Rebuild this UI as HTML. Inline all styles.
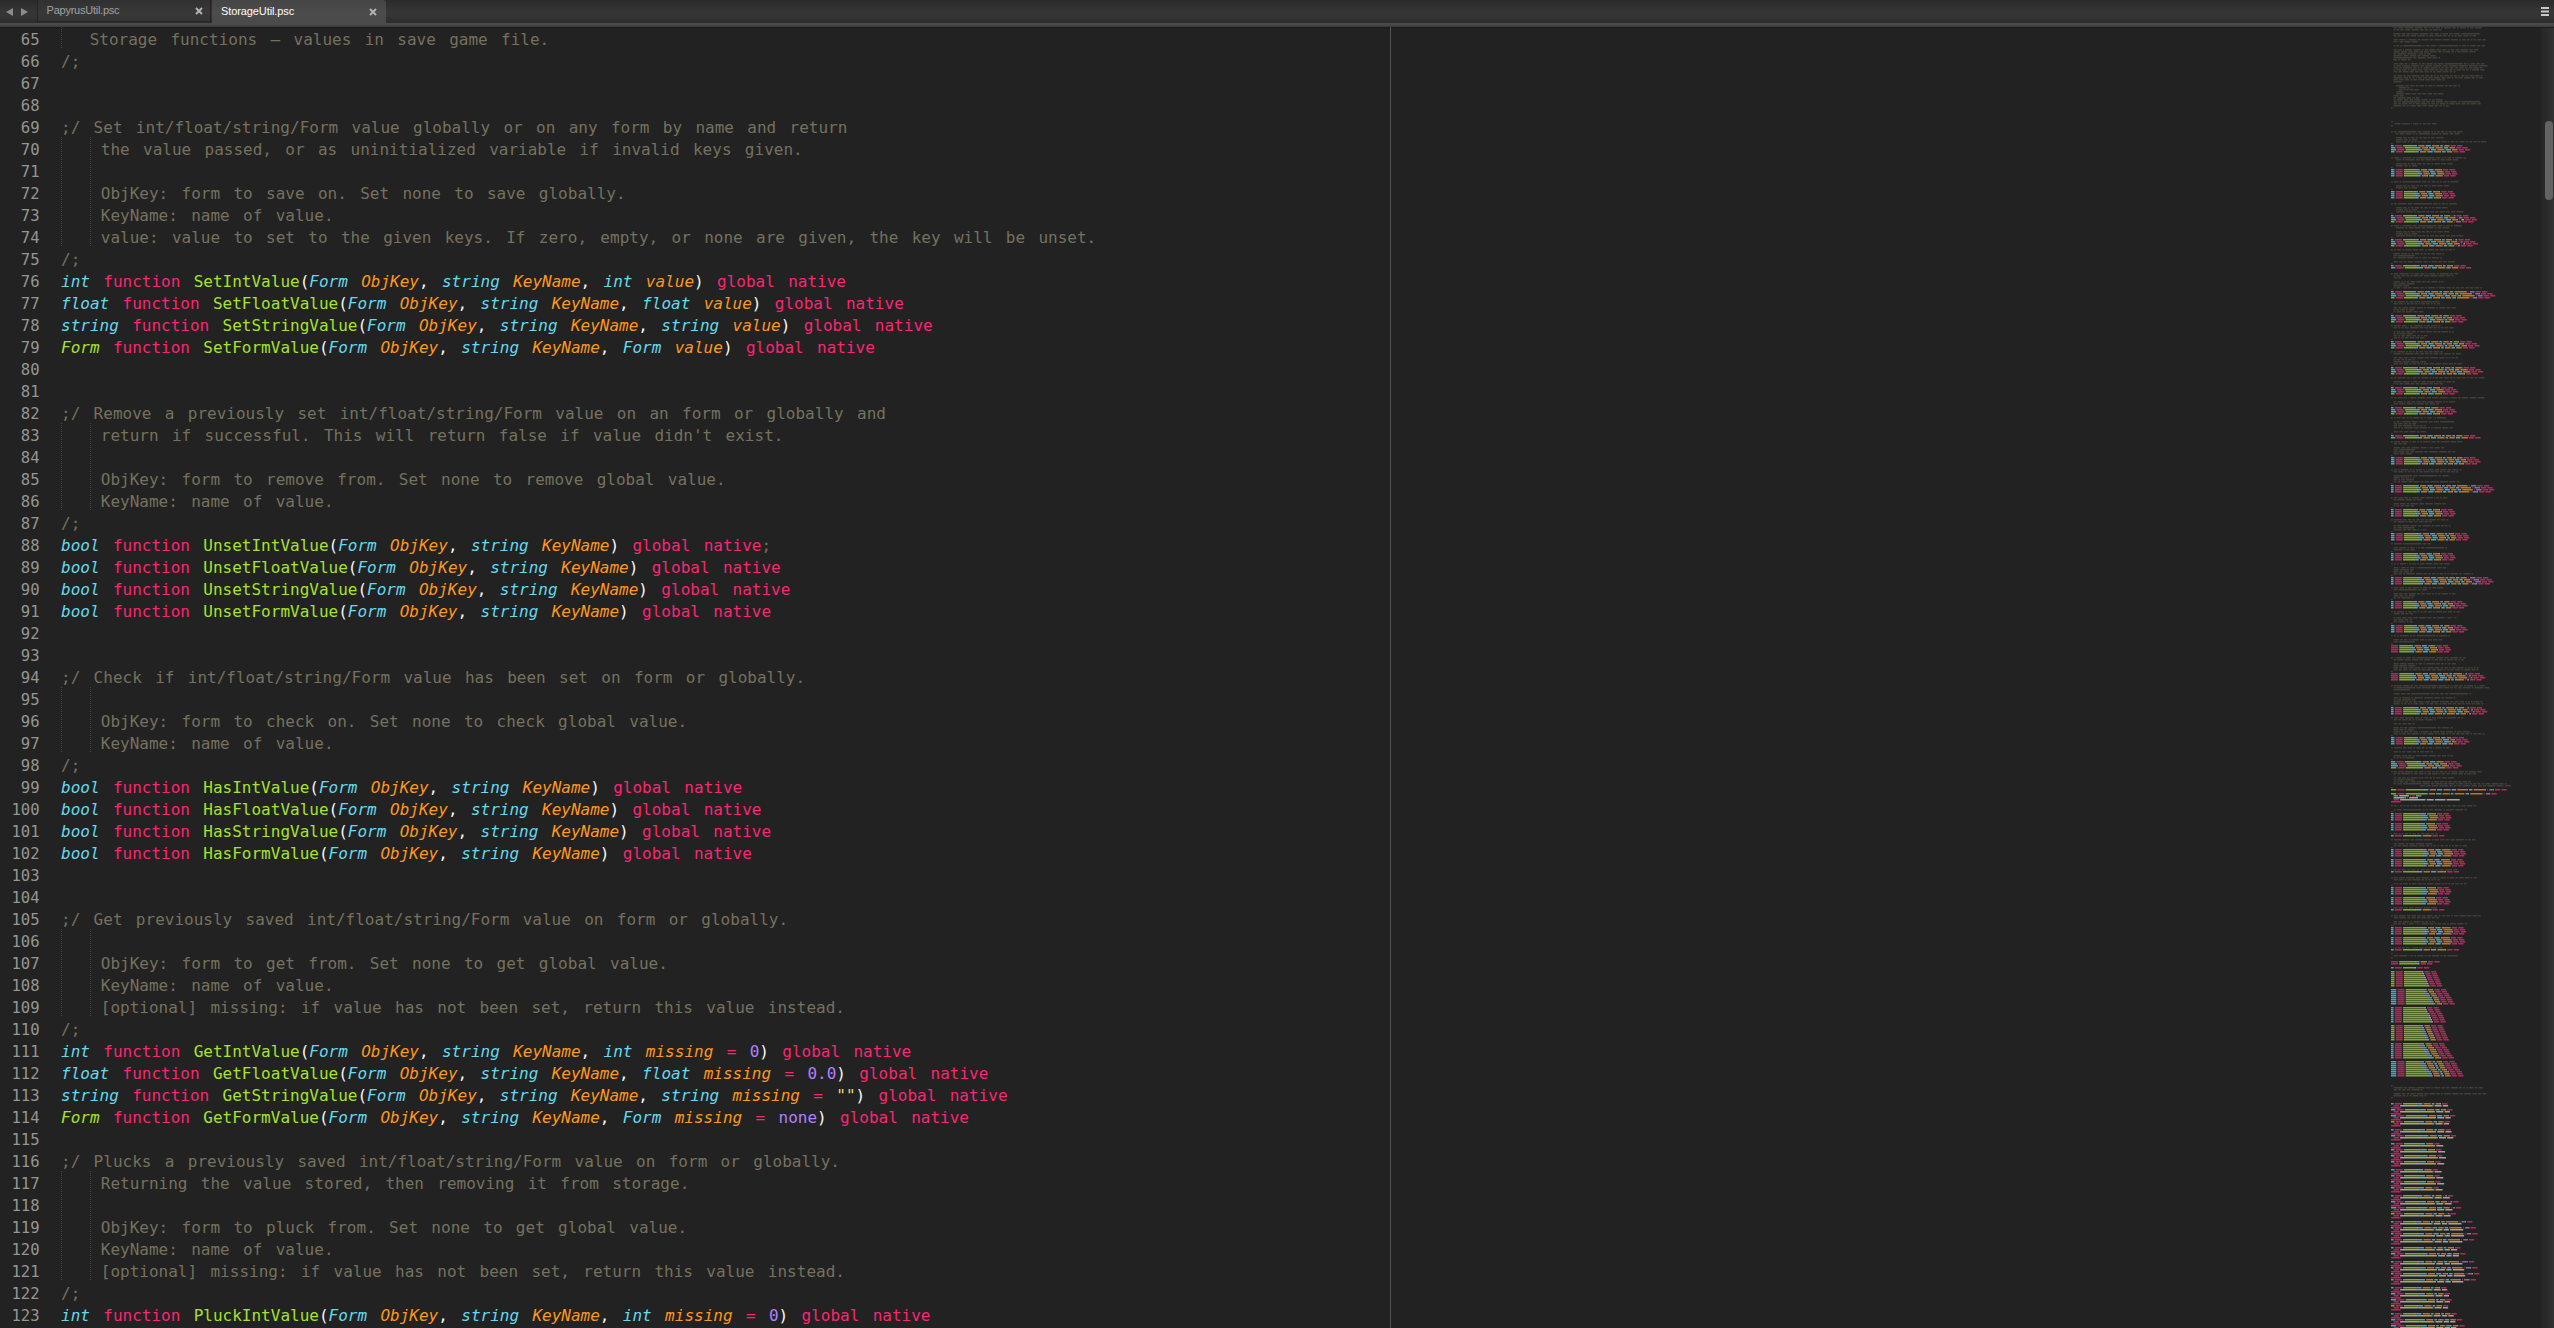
<!DOCTYPE html>
<html><head><meta charset="utf-8"><title>StorageUtil.psc</title>
<style>
html,body{margin:0;padding:0;background:#222222;}
body{width:2554px;height:1328px;overflow:hidden;position:relative;font-family:"DejaVu Sans Mono","Liberation Mono",monospace;}
#tabs{position:absolute;left:0;top:0;width:2554px;height:23px;background:linear-gradient(#2a2a2a,#363636 50%,#343434 72%,#2d2d2d 96%,#2a2a2a);}
#tabline{position:absolute;left:0;top:23px;width:2554px;height:6px;background:linear-gradient(#4c4c4c 0,#444 3px,#303030 4px,#1e1e1e 4.5px,#1e1e1e 5.3px,#222 6px);}
.tab{position:absolute;top:0;height:22px;width:174px;font:11px "Liberation Sans","DejaVu Sans",sans-serif;letter-spacing:-0.25px;line-height:21px;color:#a0a0a0;white-space:nowrap;box-sizing:border-box;}
.tab b{font-weight:normal;position:absolute;left:8.6px;top:0;}
.tab svg{position:absolute;left:157px;top:7px;}
#t1{left:37px;background:linear-gradient(#303030,#393939 60%,#343434);border-left:1px solid #252525;border-right:1px solid #252525;border-bottom:1px solid #282828;}
#t2{left:212px;background:linear-gradient(#454545,#4c4c4c 50%,#4a4a4a);color:#fff;height:24px;border-radius:0 3px 0 0;}
#t2 b{top:1px;left:9px;letter-spacing:-0.1px;}
#t2 svg{top:7.5px;left:157.3px;}
.arr{position:absolute;top:7.8px;width:0;height:0;border-top:4px solid transparent;border-bottom:4px solid transparent;}
#al{left:5.5px;border-right:7.3px solid #8c8c8c;}
#ar{left:21px;border-left:7.3px solid #8c8c8c;}
#menu{position:absolute;left:2541px;top:6.5px;width:8px;height:2px;background:#c8c8c8;box-shadow:0 3.5px 0 #c8c8c8,0 7px 0 #c8c8c8;}
#code{position:absolute;left:0;top:29px;width:2380px;font-size:16px;line-height:22px;color:#f8f8f2;word-spacing:3.72px;}
.ln{height:22px;position:relative;}
.no{position:absolute;left:0;top:0;width:39.6px;text-align:right;color:#95968f;font-size:15.6px;}
.tx{position:absolute;left:61px;top:0;white-space:pre;}
.c{color:#75715e;}
.i1{padding-left:28.7px;}
.i2{padding-left:39.8px;}
.g1,.g2{position:absolute;top:-2px;width:1px;height:22px;background:repeating-linear-gradient(#444442 0,#444442 1px,transparent 1px,transparent 2px);}
.g1{left:0;} .g2{left:29px;}
.t{color:#66d9ef;font-style:italic;}
.g{color:#a6e22e;font-style:italic;}
.k{color:#f92672;}
.f{color:#a6e22e;}
.a{color:#fd971f;font-style:italic;}
.n{color:#ae81ff;}
.s{color:#e6db74;}
.p{color:#f8f8f2;}
#ruler{position:absolute;left:1390px;top:27px;width:1px;height:1301px;background:#525252;}
#mm{position:absolute;left:2391.2px;top:27px;}
#sbtrack{position:absolute;left:2541px;top:28px;width:13px;height:1300px;background:linear-gradient(90deg,#262626,#313131);}
#sb{position:absolute;left:2545px;top:121px;width:8px;height:79px;border-radius:4px;background:#636363;}
</style></head><body>
<div id="tabs">
<i class="arr" id="al"></i><i class="arr" id="ar"></i>
<div class="tab" id="t1"><b>PapyrusUtil.psc</b><svg width="8" height="8" viewBox="0 0 8 8"><path d="M1 1L7 7M7 1L1 7" stroke="#b4b4b4" stroke-width="1.9" fill="none"/></svg></div>
<div class="tab" id="t2"><b>StorageUtil.psc</b><svg width="8" height="8" viewBox="0 0 8 8"><path d="M1 1L7 7M7 1L1 7" stroke="#b4b4b4" stroke-width="1.9" fill="none"/></svg></div>
<div id="menu"></div>
</div>
<div id="tabline"></div>
<div id="code">
<div class="ln"><span class="no">65</span><span class="tx"><i class="g1"></i><span class="c i1">Storage functions – values in save game file.</span></span></div>
<div class="ln"><span class="no">66</span><span class="tx"><span class="c">/;</span></span></div>
<div class="ln"><span class="no">67</span><span class="tx"></span></div>
<div class="ln"><span class="no">68</span><span class="tx"></span></div>
<div class="ln"><span class="no">69</span><span class="tx"><span class="c">;/ Set int/float/string/Form value globally or on any form by name and return</span></span></div>
<div class="ln"><span class="no">70</span><span class="tx"><i class="g1"></i><i class="g2"></i><span class="c i2">the value passed, or as uninitialized variable if invalid keys given.</span></span></div>
<div class="ln"><span class="no">71</span><span class="tx"><i class="g1"></i><i class="g2"></i><span class="c i2"></span></span></div>
<div class="ln"><span class="no">72</span><span class="tx"><i class="g1"></i><i class="g2"></i><span class="c i2">ObjKey: form to save on. Set none to save globally.</span></span></div>
<div class="ln"><span class="no">73</span><span class="tx"><i class="g1"></i><i class="g2"></i><span class="c i2">KeyName: name of value.</span></span></div>
<div class="ln"><span class="no">74</span><span class="tx"><i class="g1"></i><i class="g2"></i><span class="c i2">value: value to set to the given keys. If zero, empty, or none are given, the key will be unset.</span></span></div>
<div class="ln"><span class="no">75</span><span class="tx"><span class="c">/;</span></span></div>
<div class="ln"><span class="no">76</span><span class="tx"><span class="t">int</span> <span class="k">function</span> <span class="f">SetIntValue</span><span class="p">(</span><span class="t">Form</span> <span class="a">ObjKey</span><span class="p">,</span> <span class="t">string</span> <span class="a">KeyName</span><span class="p">,</span> <span class="t">int</span> <span class="a">value</span><span class="p">)</span> <span class="k">global</span> <span class="k">native</span></span></div>
<div class="ln"><span class="no">77</span><span class="tx"><span class="t">float</span> <span class="k">function</span> <span class="f">SetFloatValue</span><span class="p">(</span><span class="t">Form</span> <span class="a">ObjKey</span><span class="p">,</span> <span class="t">string</span> <span class="a">KeyName</span><span class="p">,</span> <span class="t">float</span> <span class="a">value</span><span class="p">)</span> <span class="k">global</span> <span class="k">native</span></span></div>
<div class="ln"><span class="no">78</span><span class="tx"><span class="t">string</span> <span class="k">function</span> <span class="f">SetStringValue</span><span class="p">(</span><span class="t">Form</span> <span class="a">ObjKey</span><span class="p">,</span> <span class="t">string</span> <span class="a">KeyName</span><span class="p">,</span> <span class="t">string</span> <span class="a">value</span><span class="p">)</span> <span class="k">global</span> <span class="k">native</span></span></div>
<div class="ln"><span class="no">79</span><span class="tx"><span class="g">Form</span> <span class="k">function</span> <span class="f">SetFormValue</span><span class="p">(</span><span class="t">Form</span> <span class="a">ObjKey</span><span class="p">,</span> <span class="t">string</span> <span class="a">KeyName</span><span class="p">,</span> <span class="t">Form</span> <span class="a">value</span><span class="p">)</span> <span class="k">global</span> <span class="k">native</span></span></div>
<div class="ln"><span class="no">80</span><span class="tx"></span></div>
<div class="ln"><span class="no">81</span><span class="tx"></span></div>
<div class="ln"><span class="no">82</span><span class="tx"><span class="c">;/ Remove a previously set int/float/string/Form value on an form or globally and</span></span></div>
<div class="ln"><span class="no">83</span><span class="tx"><i class="g1"></i><i class="g2"></i><span class="c i2">return if successful. This will return false if value didn't exist.</span></span></div>
<div class="ln"><span class="no">84</span><span class="tx"><i class="g1"></i><i class="g2"></i><span class="c i2"></span></span></div>
<div class="ln"><span class="no">85</span><span class="tx"><i class="g1"></i><i class="g2"></i><span class="c i2">ObjKey: form to remove from. Set none to remove global value.</span></span></div>
<div class="ln"><span class="no">86</span><span class="tx"><i class="g1"></i><i class="g2"></i><span class="c i2">KeyName: name of value.</span></span></div>
<div class="ln"><span class="no">87</span><span class="tx"><span class="c">/;</span></span></div>
<div class="ln"><span class="no">88</span><span class="tx"><span class="t">bool</span> <span class="k">function</span> <span class="f">UnsetIntValue</span><span class="p">(</span><span class="t">Form</span> <span class="a">ObjKey</span><span class="p">,</span> <span class="t">string</span> <span class="a">KeyName</span><span class="p">)</span> <span class="k">global</span> <span class="k">native</span><span class="c">;</span></span></div>
<div class="ln"><span class="no">89</span><span class="tx"><span class="t">bool</span> <span class="k">function</span> <span class="f">UnsetFloatValue</span><span class="p">(</span><span class="t">Form</span> <span class="a">ObjKey</span><span class="p">,</span> <span class="t">string</span> <span class="a">KeyName</span><span class="p">)</span> <span class="k">global</span> <span class="k">native</span></span></div>
<div class="ln"><span class="no">90</span><span class="tx"><span class="t">bool</span> <span class="k">function</span> <span class="f">UnsetStringValue</span><span class="p">(</span><span class="t">Form</span> <span class="a">ObjKey</span><span class="p">,</span> <span class="t">string</span> <span class="a">KeyName</span><span class="p">)</span> <span class="k">global</span> <span class="k">native</span></span></div>
<div class="ln"><span class="no">91</span><span class="tx"><span class="t">bool</span> <span class="k">function</span> <span class="f">UnsetFormValue</span><span class="p">(</span><span class="t">Form</span> <span class="a">ObjKey</span><span class="p">,</span> <span class="t">string</span> <span class="a">KeyName</span><span class="p">)</span> <span class="k">global</span> <span class="k">native</span></span></div>
<div class="ln"><span class="no">92</span><span class="tx"></span></div>
<div class="ln"><span class="no">93</span><span class="tx"></span></div>
<div class="ln"><span class="no">94</span><span class="tx"><span class="c">;/ Check if int/float/string/Form value has been set on form or globally.</span></span></div>
<div class="ln"><span class="no">95</span><span class="tx"><i class="g1"></i><i class="g2"></i><span class="c i2"></span></span></div>
<div class="ln"><span class="no">96</span><span class="tx"><i class="g1"></i><i class="g2"></i><span class="c i2">ObjKey: form to check on. Set none to check global value.</span></span></div>
<div class="ln"><span class="no">97</span><span class="tx"><i class="g1"></i><i class="g2"></i><span class="c i2">KeyName: name of value.</span></span></div>
<div class="ln"><span class="no">98</span><span class="tx"><span class="c">/;</span></span></div>
<div class="ln"><span class="no">99</span><span class="tx"><span class="t">bool</span> <span class="k">function</span> <span class="f">HasIntValue</span><span class="p">(</span><span class="t">Form</span> <span class="a">ObjKey</span><span class="p">,</span> <span class="t">string</span> <span class="a">KeyName</span><span class="p">)</span> <span class="k">global</span> <span class="k">native</span></span></div>
<div class="ln"><span class="no">100</span><span class="tx"><span class="t">bool</span> <span class="k">function</span> <span class="f">HasFloatValue</span><span class="p">(</span><span class="t">Form</span> <span class="a">ObjKey</span><span class="p">,</span> <span class="t">string</span> <span class="a">KeyName</span><span class="p">)</span> <span class="k">global</span> <span class="k">native</span></span></div>
<div class="ln"><span class="no">101</span><span class="tx"><span class="t">bool</span> <span class="k">function</span> <span class="f">HasStringValue</span><span class="p">(</span><span class="t">Form</span> <span class="a">ObjKey</span><span class="p">,</span> <span class="t">string</span> <span class="a">KeyName</span><span class="p">)</span> <span class="k">global</span> <span class="k">native</span></span></div>
<div class="ln"><span class="no">102</span><span class="tx"><span class="t">bool</span> <span class="k">function</span> <span class="f">HasFormValue</span><span class="p">(</span><span class="t">Form</span> <span class="a">ObjKey</span><span class="p">,</span> <span class="t">string</span> <span class="a">KeyName</span><span class="p">)</span> <span class="k">global</span> <span class="k">native</span></span></div>
<div class="ln"><span class="no">103</span><span class="tx"></span></div>
<div class="ln"><span class="no">104</span><span class="tx"></span></div>
<div class="ln"><span class="no">105</span><span class="tx"><span class="c">;/ Get previously saved int/float/string/Form value on form or globally.</span></span></div>
<div class="ln"><span class="no">106</span><span class="tx"><i class="g1"></i><i class="g2"></i><span class="c i2"></span></span></div>
<div class="ln"><span class="no">107</span><span class="tx"><i class="g1"></i><i class="g2"></i><span class="c i2">ObjKey: form to get from. Set none to get global value.</span></span></div>
<div class="ln"><span class="no">108</span><span class="tx"><i class="g1"></i><i class="g2"></i><span class="c i2">KeyName: name of value.</span></span></div>
<div class="ln"><span class="no">109</span><span class="tx"><i class="g1"></i><i class="g2"></i><span class="c i2">[optional] missing: if value has not been set, return this value instead.</span></span></div>
<div class="ln"><span class="no">110</span><span class="tx"><span class="c">/;</span></span></div>
<div class="ln"><span class="no">111</span><span class="tx"><span class="t">int</span> <span class="k">function</span> <span class="f">GetIntValue</span><span class="p">(</span><span class="t">Form</span> <span class="a">ObjKey</span><span class="p">,</span> <span class="t">string</span> <span class="a">KeyName</span><span class="p">,</span> <span class="t">int</span> <span class="a">missing</span> <span class="k">=</span> <span class="n">0</span><span class="p">)</span> <span class="k">global</span> <span class="k">native</span></span></div>
<div class="ln"><span class="no">112</span><span class="tx"><span class="t">float</span> <span class="k">function</span> <span class="f">GetFloatValue</span><span class="p">(</span><span class="t">Form</span> <span class="a">ObjKey</span><span class="p">,</span> <span class="t">string</span> <span class="a">KeyName</span><span class="p">,</span> <span class="t">float</span> <span class="a">missing</span> <span class="k">=</span> <span class="n">0.0</span><span class="p">)</span> <span class="k">global</span> <span class="k">native</span></span></div>
<div class="ln"><span class="no">113</span><span class="tx"><span class="t">string</span> <span class="k">function</span> <span class="f">GetStringValue</span><span class="p">(</span><span class="t">Form</span> <span class="a">ObjKey</span><span class="p">,</span> <span class="t">string</span> <span class="a">KeyName</span><span class="p">,</span> <span class="t">string</span> <span class="a">missing</span> <span class="k">=</span> <span class="s">""</span><span class="p">)</span> <span class="k">global</span> <span class="k">native</span></span></div>
<div class="ln"><span class="no">114</span><span class="tx"><span class="g">Form</span> <span class="k">function</span> <span class="f">GetFormValue</span><span class="p">(</span><span class="t">Form</span> <span class="a">ObjKey</span><span class="p">,</span> <span class="t">string</span> <span class="a">KeyName</span><span class="p">,</span> <span class="t">Form</span> <span class="a">missing</span> <span class="k">=</span> <span class="n">none</span><span class="p">)</span> <span class="k">global</span> <span class="k">native</span></span></div>
<div class="ln"><span class="no">115</span><span class="tx"></span></div>
<div class="ln"><span class="no">116</span><span class="tx"><span class="c">;/ Plucks a previously saved int/float/string/Form value on form or globally.</span></span></div>
<div class="ln"><span class="no">117</span><span class="tx"><i class="g1"></i><i class="g2"></i><span class="c i2">Returning the value stored, then removing it from storage.</span></span></div>
<div class="ln"><span class="no">118</span><span class="tx"><i class="g1"></i><i class="g2"></i><span class="c i2"></span></span></div>
<div class="ln"><span class="no">119</span><span class="tx"><i class="g1"></i><i class="g2"></i><span class="c i2">ObjKey: form to pluck from. Set none to get global value.</span></span></div>
<div class="ln"><span class="no">120</span><span class="tx"><i class="g1"></i><i class="g2"></i><span class="c i2">KeyName: name of value.</span></span></div>
<div class="ln"><span class="no">121</span><span class="tx"><i class="g1"></i><i class="g2"></i><span class="c i2">[optional] missing: if value has not been set, return this value instead.</span></span></div>
<div class="ln"><span class="no">122</span><span class="tx"><span class="c">/;</span></span></div>
<div class="ln"><span class="no">123</span><span class="tx"><span class="t">int</span> <span class="k">function</span> <span class="f">PluckIntValue</span><span class="p">(</span><span class="t">Form</span> <span class="a">ObjKey</span><span class="p">,</span> <span class="t">string</span> <span class="a">KeyName</span><span class="p">,</span> <span class="t">int</span> <span class="a">missing</span> <span class="k">=</span> <span class="n">0</span><span class="p">)</span> <span class="k">global</span> <span class="k">native</span></span></div>
</div>
<div id="ruler"></div>
<svg id="mm" width="150" height="1301" viewBox="0 0 150 1301" fill="none" stroke-width="1.5">
<path stroke="#75715e" stroke-opacity="0.36" d="M2.6 0.8h3.5M7.3 0.8h5.3M13.8 0.8h8.8M23.8 0.8h7.9M32.9 0.8h3.5M37.6 0.8h1.8M40.6 0.8h2.6M44.4 0.8h4.4M50.0 0.8h1.8M53.0 0.8h7.0M61.2 0.8h3.5M65.9 0.8h1.8M68.9 0.8h6.1M76.2 0.8h1.8M79.2 0.8h3.5M83.9 0.8h7.0M2.6 2.8h1.8M5.6 2.8h2.6M9.4 2.8h3.5M14.1 2.8h5.3M20.6 2.8h7.0M28.8 2.8h3.5M33.6 2.8h3.5M38.3 2.8h2.6M42.1 2.8h4.4M47.7 2.8h2.6M2.6 6.8h7.0M10.8 6.8h3.5M15.6 6.8h3.5M20.3 6.8h7.0M28.5 6.8h8.8M38.5 6.8h3.5M43.2 6.8h4.4M48.8 6.8h1.8M51.7 6.8h5.3M58.2 6.8h3.5M62.9 6.8h6.1M70.3 6.8h18.4M2.6 8.8h2.6M6.5 8.8h2.6M10.3 8.8h3.5M15.0 8.8h3.5M19.7 8.8h5.3M26.2 8.8h7.9M35.3 8.8h1.8M38.3 8.8h4.4M43.9 8.8h7.0M52.1 8.8h3.5M56.8 8.8h2.6M60.6 8.8h1.8M63.6 8.8h1.8M66.6 8.8h4.4M72.2 8.8h5.3M78.6 8.8h1.8M81.6 8.8h3.5M2.6 12.8h4.4M8.2 12.8h6.1M15.6 12.8h0.9M17.7 12.8h7.9M26.7 12.8h2.6M30.6 12.8h7.0M38.8 12.8h3.5M43.5 12.8h7.0M51.7 12.8h7.0M60.0 12.8h7.0M68.2 12.8h1.8M71.1 12.8h3.5M75.9 12.8h2.6M79.7 12.8h1.8M82.7 12.8h2.6M86.5 12.8h3.5M91.2 12.8h3.5M2.6 14.8h2.6M6.5 14.8h0.9M8.6 14.8h3.5M13.3 14.8h6.1M20.6 14.8h6.1M2.6 18.8h1.8M5.6 18.8h2.6M9.4 18.8h1.8M12.4 18.8h18.4M32.0 18.8h1.8M35.0 18.8h3.5M39.7 18.8h5.3M46.2 18.8h0.9M48.2 18.8h18.4M67.8 18.8h1.8M70.8 18.8h4.4M76.4 18.8h1.8M79.4 18.8h5.3M85.8 18.8h3.5M90.6 18.8h3.5M2.6 22.8h3.5M7.3 22.8h3.5M12.1 22.8h0.9M14.1 22.8h7.0M22.4 22.8h7.0M30.6 22.8h1.8M33.6 22.8h3.5M38.3 22.8h6.1M45.6 22.8h4.4M51.2 22.8h4.4M56.8 22.8h1.8M59.8 22.8h3.5M64.5 22.8h3.5M69.2 22.8h7.9M78.3 22.8h3.5M83.0 22.8h4.4M2.6 24.8h6.1M10.0 24.8h6.1M17.3 24.8h4.4M22.9 24.8h4.4M28.5 24.8h3.5M33.2 24.8h4.4M38.8 24.8h7.0M47.0 24.8h3.5M51.7 24.8h1.8M54.7 24.8h4.4M60.3 24.8h2.6M64.1 24.8h0.9M66.2 24.8h3.5M70.9 24.8h6.1M78.3 24.8h6.1M2.6 26.8h2.6M6.5 26.8h8.8M16.4 26.8h8.8M26.4 26.8h0.9M28.5 26.8h3.5M33.2 26.8h1.8M36.2 26.8h3.5M2.6 28.8h8.8M12.6 28.8h5.3M19.1 28.8h6.1M26.4 28.8h3.5M31.1 28.8h7.0M39.3 28.8h5.3M2.6 30.8h18.4M22.2 30.8h3.5M26.9 30.8h7.9M36.0 30.8h4.4M41.6 30.8h4.4M47.2 30.8h1.8M2.6 32.8h3.5M7.3 32.8h1.8M10.3 32.8h5.3M16.8 32.8h2.6M2.6 36.8h4.4M8.2 36.8h4.4M13.8 36.8h2.6M17.7 36.8h0.9M19.7 36.8h7.0M28.0 36.8h1.8M30.9 36.8h3.5M35.6 36.8h6.1M43.0 36.8h2.6M46.8 36.8h5.3M53.3 36.8h18.4M72.9 36.8h2.6M76.7 36.8h1.8M79.7 36.8h4.4M85.3 36.8h3.5M90.0 36.8h3.5M2.6 38.8h1.8M5.6 38.8h4.4M11.2 38.8h7.9M20.3 38.8h7.9M29.4 38.8h3.5M34.1 38.8h7.0M42.3 38.8h7.9M51.4 38.8h5.3M57.9 38.8h8.8M67.8 38.8h8.8M77.8 38.8h8.8M87.8 38.8h8.8M2.6 40.8h4.4M8.2 40.8h2.6M12.1 40.8h8.8M22.0 40.8h3.5M26.7 40.8h1.8M29.7 40.8h1.8M32.7 40.8h6.1M40.0 40.8h6.1M47.4 40.8h1.8M50.3 40.8h2.6M54.2 40.8h3.5M58.9 40.8h3.5M63.6 40.8h3.5M68.3 40.8h4.4M73.9 40.8h2.6M77.8 40.8h3.5M82.5 40.8h5.3M88.9 40.8h2.6M2.6 42.8h1.8M5.6 42.8h4.4M11.2 42.8h4.4M16.8 42.8h1.8M19.7 42.8h6.1M27.1 42.8h4.4M32.7 42.8h4.4M38.3 42.8h5.3M44.7 42.8h2.6M48.6 42.8h3.5M53.3 42.8h3.5M58.0 42.8h3.5M62.7 42.8h1.8M65.7 42.8h4.4M71.3 42.8h2.6M75.1 42.8h2.6M79.0 42.8h0.9M81.1 42.8h7.0M89.3 42.8h4.4M2.6 44.8h3.5M7.3 44.8h3.5M12.1 44.8h5.3M18.5 44.8h4.4M24.1 44.8h3.5M28.8 44.8h3.5M33.6 44.8h4.4M39.1 44.8h1.8M42.1 44.8h2.6M46.0 44.8h4.4M51.5 44.8h6.1M58.9 44.8h2.6M62.7 44.8h1.8M2.6 48.8h2.6M6.5 48.8h4.4M12.1 48.8h2.6M15.9 48.8h3.5M20.6 48.8h7.9M29.7 48.8h3.5M34.4 48.8h3.5M39.1 48.8h2.6M43.0 48.8h1.8M46.0 48.8h1.8M48.9 48.8h3.5M53.6 48.8h4.4M59.2 48.8h2.6M63.1 48.8h2.6M66.9 48.8h1.8M69.9 48.8h3.5M74.6 48.8h2.6M78.4 48.8h4.4M84.0 48.8h4.4M89.6 48.8h1.8M2.6 50.8h8.8M12.6 50.8h4.4M18.2 50.8h1.8M21.2 50.8h2.6M25.0 50.8h0.9M27.1 50.8h3.5M31.8 50.8h4.4M37.4 50.8h4.4M43.0 50.8h6.1M50.3 50.8h4.4M55.9 50.8h3.5M60.6 50.8h1.8M63.6 50.8h3.5M68.3 50.8h3.5M73.0 50.8h6.1M80.4 50.8h3.5M85.1 50.8h1.8M88.1 50.8h3.5M2.6 52.8h4.4M8.2 52.8h4.4M13.8 52.8h4.4M19.4 52.8h1.8M22.4 52.8h3.5M27.1 52.8h6.1M34.4 52.8h4.4M40.0 52.8h4.4M45.6 52.8h4.4M51.2 52.8h2.6M2.6 54.8h7.9M5.3 58.8h7.9M14.3 58.8h3.5M19.1 58.8h4.4M24.7 58.8h2.6M28.5 58.8h4.4M34.1 58.8h1.8M37.1 58.8h4.4M42.6 58.8h1.8M45.6 58.8h7.0M53.8 58.8h2.6M57.7 58.8h3.5M62.4 58.8h3.5M67.1 58.8h1.8M7.9 60.8h7.0M16.1 60.8h2.6M7.9 62.8h3.5M12.6 62.8h1.8M15.6 62.8h1.8M18.5 62.8h3.5M23.2 62.8h4.4M5.3 64.8h7.0M5.3 66.8h7.9M14.3 66.8h5.3M20.8 66.8h4.4M26.4 66.8h3.5M31.1 66.8h4.4M36.7 66.8h4.4M42.3 66.8h3.5M47.0 66.8h5.3M2.6 68.8h5.3M9.1 68.8h3.5M2.6 70.8h2.6M6.5 70.8h7.9M15.6 70.8h4.4M21.2 70.8h2.6M25.0 70.8h3.5M2.6 72.8h1.8M5.6 72.8h6.1M12.9 72.8h4.4M18.5 72.8h3.5M23.2 72.8h6.1M30.6 72.8h6.1M37.9 72.8h1.8M40.9 72.8h2.6M44.7 72.8h7.0M2.6 74.8h3.5M7.3 74.8h2.6M11.2 74.8h18.4M30.8 74.8h3.5M35.5 74.8h3.5M40.2 74.8h3.5M44.9 74.8h7.0M53.2 74.8h4.4M58.7 74.8h7.0M67.0 74.8h2.6M70.8 74.8h18.4M2.6 76.8h3.5M7.3 76.8h2.6M11.2 76.8h5.3M17.7 76.8h2.6M21.5 76.8h1.8M24.5 76.8h4.4M30.1 76.8h6.1M37.4 76.8h1.8M40.4 76.8h3.5M45.1 76.8h2.6M48.9 76.8h5.3M55.4 76.8h1.8M58.4 76.8h5.3M64.8 76.8h4.4M70.4 76.8h4.4M76.0 76.8h2.6M79.8 76.8h5.3M86.3 76.8h3.5M2.6 78.8h7.9M11.7 78.8h2.6M15.6 78.8h2.6M19.4 78.8h5.3M25.9 78.8h4.4M31.5 78.8h4.4M37.1 78.8h5.3M43.5 78.8h3.5M48.2 78.8h2.6M52.1 78.8h1.8M55.0 78.8h2.6M0.0 80.8h1.8M0.0 94.8h1.8M3.6 96.8h6.1M11.0 96.8h7.9M20.1 96.8h0.9M22.2 96.8h5.3M28.6 96.8h1.8M31.6 96.8h3.5M36.3 96.8h3.5M41.0 96.8h4.4M0.0 98.8h1.8M0.0 104.8h1.8M3.0 104.8h2.6M6.8 104.8h18.4M26.4 104.8h4.4M32.0 104.8h7.0M40.2 104.8h1.8M43.2 104.8h1.8M46.2 104.8h2.6M50.0 104.8h3.5M54.7 104.8h1.8M57.7 104.8h3.5M62.4 104.8h2.6M66.2 104.8h5.3M4.9 106.8h2.6M8.7 106.8h4.4M14.3 106.8h6.1M21.6 106.8h1.8M24.6 106.8h1.8M27.6 106.8h11.4M40.2 106.8h7.0M48.4 106.8h1.8M51.3 106.8h6.1M58.7 106.8h3.5M63.4 106.8h5.3M4.9 110.8h6.1M12.2 110.8h3.5M16.9 110.8h1.8M19.9 110.8h3.5M24.6 110.8h2.6M28.4 110.8h2.6M32.3 110.8h3.5M37.0 110.8h1.8M40.0 110.8h3.5M44.7 110.8h7.9M4.9 112.8h7.0M13.1 112.8h3.5M17.8 112.8h1.8M20.8 112.8h5.3M4.9 114.8h5.3M11.3 114.8h4.4M16.9 114.8h1.8M19.9 114.8h2.6M23.7 114.8h1.8M26.7 114.8h2.6M30.5 114.8h4.4M36.1 114.8h4.4M41.7 114.8h1.8M44.7 114.8h4.4M50.3 114.8h5.3M56.7 114.8h1.8M59.7 114.8h3.5M64.4 114.8h2.6M68.3 114.8h5.3M74.7 114.8h2.6M78.6 114.8h2.6M82.4 114.8h3.5M87.1 114.8h1.8M90.1 114.8h5.3M0.0 116.8h1.8M0.0 130.8h1.8M3.0 130.8h5.3M9.4 130.8h0.9M11.5 130.8h8.8M21.5 130.8h2.6M25.3 130.8h18.4M44.9 130.8h4.4M50.5 130.8h1.8M53.5 130.8h1.8M56.5 130.8h3.5M61.2 130.8h1.8M64.1 130.8h7.0M72.4 130.8h2.6M4.9 132.8h5.3M11.3 132.8h1.8M14.3 132.8h9.6M25.1 132.8h3.5M29.9 132.8h3.5M34.6 132.8h5.3M41.0 132.8h4.4M46.6 132.8h1.8M49.6 132.8h4.4M55.2 132.8h5.3M61.7 132.8h5.3M4.9 136.8h6.1M12.2 136.8h3.5M16.9 136.8h1.8M19.9 136.8h5.3M26.3 136.8h4.4M31.9 136.8h2.6M35.8 136.8h3.5M40.5 136.8h1.8M43.5 136.8h5.3M49.9 136.8h5.3M56.4 136.8h5.3M4.9 138.8h7.0M13.1 138.8h3.5M17.8 138.8h1.8M20.8 138.8h5.3M0.0 140.8h1.8M63.7 142.8h0.9M0.0 154.8h1.8M3.0 154.8h4.4M8.6 154.8h1.8M11.5 154.8h18.4M31.1 154.8h4.4M36.7 154.8h2.6M40.6 154.8h3.5M45.3 154.8h2.6M49.1 154.8h1.8M52.1 154.8h3.5M56.8 154.8h1.8M59.8 154.8h7.9M4.9 158.8h6.1M12.2 158.8h3.5M16.9 158.8h1.8M19.9 158.8h4.4M25.5 158.8h2.6M29.3 158.8h2.6M33.2 158.8h3.5M37.9 158.8h1.8M40.8 158.8h4.4M46.4 158.8h5.3M52.9 158.8h5.3M4.9 160.8h7.0M13.1 160.8h3.5M17.8 160.8h1.8M20.8 160.8h5.3M0.0 162.8h1.8M0.0 176.8h1.8M3.0 176.8h2.6M6.8 176.8h8.8M16.8 176.8h4.4M22.4 176.8h18.4M42.0 176.8h4.4M47.6 176.8h1.8M50.5 176.8h3.5M55.2 176.8h1.8M58.2 176.8h7.9M4.9 180.8h6.1M12.2 180.8h3.5M16.9 180.8h1.8M19.9 180.8h2.6M23.7 180.8h4.4M29.3 180.8h2.6M33.2 180.8h3.5M37.9 180.8h1.8M40.8 180.8h2.6M44.7 180.8h5.3M51.1 180.8h5.3M4.9 182.8h7.0M13.1 182.8h3.5M17.8 182.8h1.8M20.8 182.8h5.3M4.9 184.8h8.8M14.8 184.8h7.0M23.0 184.8h1.8M26.0 184.8h4.4M31.6 184.8h2.6M35.4 184.8h2.6M39.3 184.8h3.5M44.0 184.8h3.5M48.7 184.8h5.3M55.2 184.8h3.5M59.9 184.8h4.4M65.5 184.8h7.0M0.0 186.8h1.8M0.0 198.8h1.8M3.0 198.8h5.3M9.4 198.8h0.9M11.5 198.8h8.8M21.5 198.8h4.4M27.1 198.8h18.4M46.7 198.8h4.4M52.3 198.8h1.8M55.2 198.8h3.5M60.0 198.8h1.8M62.9 198.8h7.9M4.9 200.8h7.9M13.9 200.8h2.6M17.8 200.8h4.4M23.4 200.8h6.1M30.7 200.8h3.5M35.4 200.8h7.0M43.7 200.8h1.8M46.6 200.8h3.5M51.3 200.8h7.0M4.9 204.8h6.1M12.2 204.8h3.5M16.9 204.8h1.8M19.9 204.8h4.4M25.5 204.8h4.4M31.1 204.8h2.6M34.9 204.8h3.5M39.6 204.8h1.8M42.6 204.8h2.6M46.4 204.8h5.3M52.9 204.8h5.3M4.9 206.8h7.0M13.1 206.8h3.5M17.8 206.8h1.8M20.8 206.8h5.3M4.9 208.8h8.8M14.8 208.8h7.0M23.0 208.8h1.8M26.0 208.8h4.4M31.6 208.8h2.6M35.4 208.8h2.6M39.3 208.8h3.5M44.0 208.8h3.5M48.7 208.8h5.3M55.2 208.8h3.5M59.9 208.8h4.4M65.5 208.8h7.0M0.0 210.8h1.8M0.0 222.8h1.8M3.0 222.8h1.8M5.9 222.8h4.4M11.5 222.8h1.8M14.5 222.8h6.1M21.8 222.8h5.3M28.3 222.8h4.4M33.9 222.8h1.8M36.9 222.8h6.1M44.2 222.8h3.5M48.9 222.8h4.4M54.5 222.8h1.8M57.5 222.8h3.5M62.2 222.8h1.8M2.6 226.8h6.1M10.0 226.8h6.1M17.3 226.8h1.8M20.3 226.8h2.6M24.1 226.8h4.4M29.7 226.8h1.8M32.7 226.8h2.6M36.5 226.8h2.6M40.4 226.8h3.5M45.1 226.8h5.3M51.5 226.8h1.8M2.6 228.8h3.5M7.3 228.8h16.6M2.6 230.8h2.6M6.5 230.8h8.8M16.4 230.8h6.1M23.8 230.8h3.5M28.5 230.8h1.8M31.5 230.8h4.4M37.1 230.8h2.6M40.9 230.8h7.0M49.1 230.8h1.8M2.6 234.8h4.4M8.2 234.8h3.5M12.9 234.8h2.6M16.8 234.8h5.3M23.2 234.8h7.9M32.3 234.8h4.4M37.9 234.8h1.8M40.9 234.8h5.3M47.4 234.8h3.5M52.1 234.8h3.5M56.8 234.8h7.0M0.0 236.8h1.8M0.0 246.8h1.8M3.0 246.8h4.4M8.6 246.8h8.8M18.5 246.8h0.9M20.6 246.8h1.8M23.6 246.8h4.4M29.2 246.8h4.4M34.8 246.8h1.8M37.7 246.8h7.0M46.0 246.8h1.8M48.9 246.8h8.8M58.9 246.8h3.5M63.6 246.8h3.5M2.6 248.8h1.8M5.6 248.8h3.5M10.3 248.8h3.5M15.0 248.8h3.5M19.7 248.8h1.8M22.7 248.8h4.4M28.3 248.8h3.5M33.0 248.8h5.3M39.5 248.8h7.0M47.7 248.8h6.1M55.0 248.8h4.4M60.6 248.8h1.8M2.6 250.8h3.5M7.3 250.8h2.6M2.6 254.8h6.1M10.0 254.8h1.8M12.9 254.8h1.8M15.9 254.8h2.6M19.7 254.8h4.4M25.3 254.8h4.4M30.9 254.8h3.5M35.6 254.8h3.5M40.4 254.8h6.1M47.7 254.8h1.8M50.7 254.8h1.8M2.6 256.8h3.5M7.3 256.8h7.0M15.6 256.8h7.9M2.6 258.8h8.8M12.6 258.8h5.3M2.6 260.8h1.8M5.6 260.8h3.5M10.3 260.8h0.9M12.4 260.8h3.5M17.1 260.8h3.5M21.8 260.8h6.1M29.2 260.8h3.5M33.9 260.8h1.8M36.9 260.8h7.0M45.1 260.8h1.8M48.0 260.8h6.1M55.4 260.8h4.4M61.0 260.8h2.6M64.8 260.8h3.5M69.5 260.8h3.5M74.3 260.8h3.5M79.0 260.8h3.5M83.7 260.8h4.4M89.3 260.8h1.8M0.0 262.8h1.8M0.0 274.8h1.8M3.0 274.8h2.6M6.8 274.8h7.0M15.0 274.8h2.6M18.9 274.8h3.5M23.6 274.8h5.3M30.1 274.8h18.4M2.6 276.8h4.4M8.2 276.8h3.5M12.9 276.8h1.8M15.9 276.8h2.6M19.7 276.8h2.6M23.6 276.8h2.6M27.4 276.8h1.8M30.4 276.8h3.5M35.1 276.8h3.5M39.8 276.8h1.8M42.8 276.8h1.8M45.8 276.8h3.5M2.6 280.8h3.5M7.3 280.8h2.6M11.2 280.8h6.1M18.5 280.8h6.1M25.9 280.8h6.1M33.2 280.8h1.8M36.2 280.8h7.9M45.3 280.8h1.8M48.2 280.8h6.1M55.6 280.8h3.5M60.3 280.8h4.4M2.6 282.8h1.8M5.6 282.8h2.6M9.4 282.8h4.4M15.0 282.8h1.8M18.0 282.8h5.3M2.6 284.8h1.8M5.6 284.8h4.4M11.2 284.8h2.6M15.0 284.8h6.1M22.4 284.8h4.4M28.0 284.8h4.4M0.0 286.8h1.8M0.0 298.8h1.8M3.0 298.8h7.0M11.2 298.8h4.4M16.8 298.8h0.9M18.9 298.8h2.6M22.7 298.8h8.8M32.7 298.8h1.8M35.6 298.8h3.5M40.4 298.8h6.1M47.7 298.8h1.8M2.6 300.8h3.5M7.3 300.8h1.8M10.3 300.8h2.6M14.1 300.8h3.5M18.9 300.8h8.8M28.8 300.8h3.5M33.6 300.8h3.5M38.3 300.8h3.5M43.0 300.8h2.6M46.8 300.8h1.8M49.8 300.8h2.6M53.6 300.8h3.5M58.4 300.8h4.4M2.6 304.8h1.8M5.6 304.8h3.5M10.3 304.8h3.5M15.0 304.8h4.4M20.6 304.8h4.4M26.2 304.8h1.8M29.2 304.8h4.4M34.8 304.8h6.1M42.1 304.8h3.5M46.8 304.8h2.6M50.7 304.8h6.1M58.0 304.8h1.8M61.0 304.8h1.8M2.6 306.8h1.8M5.6 306.8h1.8M8.6 306.8h6.1M15.9 306.8h6.1M2.6 308.8h3.5M7.3 308.8h1.8M10.3 308.8h3.5M15.0 308.8h5.3M21.5 308.8h3.5M26.2 308.8h2.6M30.1 308.8h1.8M33.0 308.8h3.5M2.6 310.8h3.5M7.3 310.8h1.8M10.3 310.8h2.6M14.1 310.8h3.5M18.9 310.8h4.4M24.5 310.8h3.5M29.2 310.8h4.4M0.0 312.8h1.8M0.0 324.8h1.8M3.0 324.8h1.8M5.9 324.8h7.9M15.0 324.8h1.8M18.0 324.8h2.6M21.8 324.8h1.8M24.8 324.8h2.6M28.6 324.8h3.5M33.4 324.8h3.5M38.1 324.8h3.5M42.8 324.8h5.3M49.3 324.8h2.6M2.6 326.8h7.0M10.8 326.8h1.8M13.8 326.8h8.8M23.8 326.8h4.4M29.4 326.8h3.5M34.1 326.8h3.5M38.8 326.8h2.6M42.6 326.8h4.4M48.2 326.8h3.5M53.0 326.8h7.0M61.2 326.8h2.6M65.0 326.8h5.3M2.6 330.8h3.5M7.3 330.8h4.4M12.9 330.8h3.5M17.7 330.8h0.9M19.7 330.8h5.3M26.2 330.8h6.1M33.6 330.8h4.4M39.1 330.8h7.9M48.2 330.8h5.3M54.7 330.8h1.8M57.7 330.8h1.8M60.6 330.8h2.6M64.5 330.8h2.6M2.6 332.8h1.8M5.6 332.8h3.5M10.3 332.8h2.6M14.1 332.8h1.8M17.1 332.8h3.5M21.8 332.8h1.8M2.6 334.8h7.9M11.7 334.8h7.0M19.9 334.8h7.9M29.0 334.8h6.1M2.6 336.8h4.4M8.2 336.8h3.5M12.9 336.8h4.4M18.5 336.8h1.8M21.5 336.8h3.5M26.2 336.8h2.6M30.1 336.8h1.8M33.0 336.8h4.4M38.6 336.8h4.4M44.2 336.8h6.1M51.5 336.8h5.3M58.0 336.8h3.5M62.7 336.8h2.6M66.6 336.8h4.4M0.0 338.8h1.8M0.0 350.8h1.8M3.0 350.8h2.6M6.8 350.8h7.9M15.9 350.8h2.6M19.7 350.8h0.9M21.8 350.8h3.5M26.5 350.8h2.6M30.4 350.8h7.0M38.6 350.8h1.8M41.6 350.8h1.8M44.5 350.8h2.6M48.4 350.8h3.5M53.1 350.8h4.4M58.7 350.8h2.6M62.5 350.8h1.8M65.5 350.8h4.4M71.1 350.8h3.5M75.8 350.8h1.8M78.8 350.8h3.5M83.5 350.8h2.6M87.3 350.8h6.1M2.6 354.8h7.9M11.7 354.8h7.0M19.9 354.8h0.9M22.0 354.8h4.4M27.6 354.8h1.8M30.6 354.8h4.4M36.2 354.8h7.9M45.3 354.8h6.1M52.6 354.8h1.8M55.6 354.8h4.4M61.2 354.8h2.6M2.6 356.8h1.8M5.6 356.8h1.8M8.6 356.8h3.5M13.3 356.8h5.3M19.7 356.8h3.5M24.5 356.8h3.5M29.2 356.8h7.9M38.3 356.8h3.5M43.0 356.8h4.4M48.6 356.8h3.5M0.0 358.8h1.8M0.0 370.8h1.8M3.0 370.8h2.6M6.8 370.8h4.4M12.4 370.8h3.5M17.1 370.8h0.9M19.2 370.8h6.1M26.5 370.8h7.9M35.6 370.8h4.4M41.2 370.8h6.1M48.6 370.8h7.9M57.7 370.8h0.9M59.8 370.8h6.1M67.1 370.8h2.6M70.9 370.8h6.1M78.3 370.8h7.0M86.5 370.8h7.0M2.6 374.8h2.6M6.5 374.8h5.3M12.9 374.8h1.8M15.9 374.8h3.5M20.6 374.8h3.5M25.3 374.8h4.4M30.9 374.8h4.4M36.5 374.8h6.1M43.9 374.8h7.0M52.1 374.8h1.8M55.0 374.8h1.8M58.0 374.8h6.1M2.6 376.8h4.4M8.2 376.8h6.1M15.6 376.8h6.1M22.9 376.8h1.8M25.9 376.8h7.0M34.1 376.8h3.5M38.8 376.8h5.3M45.3 376.8h2.6M0.0 378.8h1.8M0.0 390.8h1.8M3.0 390.8h1.8M5.9 390.8h3.5M10.6 390.8h3.5M15.4 390.8h2.6M19.2 390.8h1.8M22.2 390.8h6.1M29.5 390.8h2.6M33.4 390.8h1.8M36.3 390.8h4.4M41.9 390.8h0.9M44.0 390.8h0.9M46.1 390.8h8.8M2.6 394.8h1.8M5.6 394.8h2.6M9.4 394.8h0.9M11.5 394.8h7.9M20.6 394.8h6.1M28.0 394.8h8.8M37.9 394.8h3.5M42.6 394.8h5.3M49.1 394.8h14.0M2.6 396.8h3.5M7.3 396.8h4.4M12.9 396.8h3.5M17.7 396.8h2.6M21.5 396.8h3.5M2.6 398.8h3.5M7.3 398.8h3.5M12.1 398.8h8.8M22.0 398.8h2.6M25.9 398.8h1.8M28.8 398.8h2.6M32.7 398.8h1.8M2.6 400.8h3.5M7.3 400.8h1.8M10.3 400.8h1.8M13.3 400.8h8.8M23.2 400.8h4.4M28.8 400.8h7.0M37.1 400.8h1.8M40.0 400.8h1.8M43.0 400.8h7.0M51.2 400.8h6.1M58.6 400.8h3.5M2.6 404.8h4.4M8.2 404.8h3.5M12.9 404.8h4.4M18.5 404.8h6.1M25.9 404.8h2.6M29.7 404.8h5.3M0.0 406.8h1.8M0.0 414.8h1.8M3.0 414.8h6.1M10.3 414.8h7.0M18.5 414.8h1.8M21.5 414.8h3.5M26.2 414.8h1.8M29.2 414.8h1.8M32.1 414.8h7.0M40.4 414.8h4.4M46.0 414.8h2.6M49.8 414.8h8.8M59.8 414.8h5.3M66.2 414.8h5.3M2.6 416.8h3.5M7.3 416.8h3.5M12.1 416.8h3.5M2.6 420.8h6.1M10.0 420.8h4.4M15.6 420.8h3.5M20.3 420.8h7.9M29.4 420.8h6.1M36.7 420.8h0.9M38.8 420.8h3.5M43.5 420.8h5.3M50.0 420.8h3.5M2.6 422.8h4.4M8.2 422.8h15.8M2.6 424.8h3.5M7.3 424.8h6.1M14.7 424.8h3.5M19.4 424.8h3.5M24.1 424.8h7.9M33.2 424.8h3.5M37.9 424.8h8.8M47.9 424.8h7.9M57.0 424.8h2.6M60.8 424.8h3.5M2.6 426.8h5.3M9.1 426.8h4.4M14.7 426.8h6.1M0.0 428.8h1.8M0.0 442.8h1.8M3.0 442.8h2.6M6.8 442.8h1.8M9.8 442.8h7.9M18.9 442.8h1.8M21.8 442.8h1.8M24.8 442.8h6.1M32.1 442.8h1.8M35.1 442.8h0.9M37.2 442.8h5.3M43.7 442.8h4.4M49.3 442.8h6.1M56.6 442.8h3.5M61.3 442.8h6.1M68.7 442.8h1.8M2.6 444.8h3.5M7.3 444.8h5.3M13.8 444.8h1.8M16.8 444.8h2.6M20.6 444.8h3.5M25.3 444.8h1.8M28.3 444.8h3.5M33.0 444.8h5.3M39.5 444.8h3.5M44.2 444.8h3.5M48.9 444.8h2.6M52.8 444.8h1.8M55.7 444.8h3.5M60.4 444.8h3.5M65.2 444.8h1.8M2.6 448.8h18.4M22.2 448.8h4.4M27.8 448.8h18.4M47.4 448.8h2.6M51.3 448.8h6.1M2.6 450.8h6.1M10.0 450.8h3.5M14.7 450.8h3.5M19.4 450.8h0.9M21.5 450.8h1.8M2.6 452.8h3.5M7.3 452.8h1.8M10.3 452.8h3.5M15.0 452.8h7.9M2.6 454.8h2.6M6.5 454.8h2.6M10.3 454.8h6.1M17.7 454.8h3.5M22.4 454.8h6.1M29.7 454.8h2.6M33.6 454.8h4.4M39.1 454.8h8.8M49.1 454.8h7.9M58.2 454.8h6.1M65.6 454.8h2.6M0.0 456.8h1.8M0.0 470.8h1.8M3.0 470.8h3.5M7.7 470.8h4.4M13.3 470.8h3.5M18.0 470.8h1.8M21.0 470.8h7.0M29.2 470.8h4.4M34.8 470.8h7.0M43.0 470.8h0.9M45.1 470.8h2.6M48.9 470.8h1.8M51.9 470.8h4.4M2.6 472.8h2.6M6.5 472.8h7.0M14.7 472.8h6.1M22.0 472.8h2.6M25.9 472.8h4.4M2.6 476.8h5.3M9.1 476.8h5.3M15.6 476.8h2.6M19.4 476.8h7.9M28.5 476.8h4.4M34.1 476.8h7.9M43.2 476.8h7.0M51.4 476.8h3.5M2.6 478.8h1.8M5.6 478.8h2.6M9.4 478.8h3.5M14.1 478.8h4.4M19.7 478.8h3.5M0.0 480.8h1.8M0.0 492.8h1.8M3.0 492.8h7.9M12.1 492.8h3.5M16.8 492.8h3.5M21.5 492.8h2.6M25.3 492.8h3.5M30.1 492.8h2.6M33.9 492.8h2.6M37.7 492.8h7.0M46.0 492.8h2.6M49.8 492.8h4.4M55.4 492.8h1.8M2.6 494.8h2.6M6.5 494.8h7.0M14.7 494.8h1.8M17.7 494.8h4.4M23.2 494.8h3.5M28.0 494.8h4.4M33.6 494.8h3.5M38.3 494.8h2.6M2.6 498.8h2.6M6.5 498.8h3.5M11.2 498.8h7.0M19.4 498.8h6.1M26.7 498.8h3.5M31.5 498.8h7.9M40.6 498.8h2.6M44.4 498.8h4.4M50.0 498.8h2.6M53.8 498.8h2.6M57.7 498.8h1.8M2.6 500.8h2.6M6.5 500.8h4.4M12.1 500.8h11.4M2.6 502.8h7.9M11.7 502.8h3.5M16.4 502.8h3.5M21.2 502.8h4.4M26.7 502.8h1.8M29.7 502.8h0.9M31.8 502.8h3.5M0.0 504.8h1.8M0.0 516.8h1.8M3.0 516.8h7.9M12.1 516.8h18.4M31.7 516.8h3.5M36.4 516.8h3.5M2.6 520.8h4.4M8.2 520.8h7.0M16.4 520.8h1.8M19.4 520.8h4.4M25.0 520.8h0.9M27.1 520.8h1.8M30.1 520.8h3.5M34.8 520.8h18.4M54.4 520.8h1.8M2.6 522.8h8.8M12.6 522.8h1.8M15.6 522.8h2.6M19.4 522.8h4.4M0.0 524.8h1.8M0.0 536.8h1.8M3.0 536.8h1.8M5.9 536.8h1.8M8.9 536.8h6.1M16.2 536.8h0.9M18.3 536.8h1.8M21.3 536.8h3.5M26.0 536.8h1.8M29.0 536.8h4.4M34.6 536.8h7.0M42.8 536.8h4.4M48.4 536.8h3.5M53.1 536.8h6.1M2.6 540.8h4.4M8.2 540.8h0.9M10.3 540.8h4.4M15.9 540.8h1.8M18.9 540.8h4.4M24.5 540.8h0.9M26.5 540.8h18.4M46.2 540.8h4.4M51.7 540.8h3.5M2.6 542.8h5.3M9.1 542.8h8.8M19.1 542.8h3.5M2.6 544.8h4.4M8.2 544.8h3.5M12.9 544.8h5.3M19.4 544.8h1.8M2.6 546.8h3.5M7.3 546.8h3.5M12.1 546.8h1.8M15.0 546.8h8.8M25.0 546.8h6.1M32.3 546.8h3.5M37.1 546.8h2.6M40.9 546.8h3.5M45.6 546.8h1.8M48.6 546.8h3.5M53.3 546.8h1.8M56.3 546.8h1.8M59.2 546.8h7.9M68.3 546.8h2.6M72.2 546.8h7.0M80.4 546.8h1.8M0.0 548.8h1.8M0.0 560.8h1.8M3.0 560.8h4.4M8.6 560.8h4.4M14.1 560.8h1.8M17.1 560.8h3.5M21.8 560.8h6.1M29.2 560.8h1.8M32.1 560.8h4.4M37.7 560.8h2.6M41.6 560.8h3.5M46.3 560.8h6.1M2.6 562.8h3.5M7.3 562.8h18.4M26.9 562.8h2.6M30.8 562.8h5.3M2.6 566.8h4.4M8.2 566.8h3.5M12.9 566.8h3.5M17.7 566.8h7.0M25.9 566.8h3.5M30.6 566.8h3.5M35.3 566.8h4.4M40.9 566.8h1.8M43.9 566.8h1.8M46.8 566.8h2.6M50.7 566.8h6.1M58.0 566.8h1.8M61.0 566.8h3.5M2.6 568.8h4.4M8.2 568.8h4.4M13.8 568.8h2.6M17.7 568.8h6.1M2.6 570.8h2.6M6.5 570.8h2.6M10.3 570.8h8.8M20.3 570.8h1.8M0.0 572.8h1.8M0.0 584.8h1.8M3.0 584.8h1.8M5.9 584.8h7.0M14.1 584.8h1.8M17.1 584.8h3.5M21.8 584.8h3.5M26.5 584.8h1.8M29.5 584.8h1.8M32.5 584.8h3.5M37.2 584.8h3.5M41.9 584.8h1.8M44.9 584.8h6.1M52.2 584.8h3.5M56.9 584.8h4.4M62.5 584.8h1.8M65.5 584.8h3.5M2.6 586.8h6.1M10.0 586.8h3.5M14.7 586.8h2.6M18.5 586.8h3.5M2.6 590.8h1.8M5.6 590.8h4.4M11.2 590.8h4.4M16.8 590.8h4.4M22.4 590.8h4.4M28.0 590.8h7.0M36.2 590.8h4.4M41.8 590.8h3.5M46.5 590.8h7.0M54.7 590.8h0.9M56.8 590.8h3.5M61.5 590.8h0.9M63.6 590.8h1.8M2.6 592.8h3.5M7.3 592.8h5.3M13.8 592.8h3.5M18.5 592.8h2.6M2.6 594.8h3.5M7.3 594.8h7.0M15.6 594.8h1.8M18.5 594.8h3.5M0.0 596.8h1.8M0.0 608.8h1.8M3.0 608.8h1.8M5.9 608.8h1.8M8.9 608.8h8.8M18.9 608.8h1.8M21.8 608.8h2.6M25.7 608.8h18.4M45.3 608.8h1.8M48.2 608.8h7.9M57.3 608.8h1.8M2.6 612.8h5.3M9.1 612.8h2.6M12.9 612.8h3.5M17.7 612.8h1.8M20.6 612.8h7.0M28.8 612.8h4.4M34.4 612.8h1.8M37.4 612.8h3.5M42.1 612.8h4.4M47.7 612.8h3.5M2.6 614.8h4.4M8.2 614.8h15.8M0.0 616.8h1.8M0.0 630.8h1.8M3.0 630.8h0.9M5.1 630.8h6.1M12.4 630.8h1.8M15.4 630.8h4.4M21.0 630.8h3.5M25.7 630.8h18.4M45.3 630.8h7.0M53.5 630.8h4.4M59.1 630.8h7.9M68.2 630.8h2.6M72.0 630.8h2.6M2.6 632.8h2.6M6.5 632.8h6.1M13.8 632.8h6.1M21.2 632.8h6.1M28.5 632.8h3.5M33.2 632.8h6.1M40.6 632.8h1.8M43.5 632.8h3.5M48.2 632.8h3.5M53.0 632.8h1.8M55.9 632.8h6.1M63.3 632.8h2.6M67.1 632.8h1.8M70.1 632.8h2.6M2.6 636.8h5.3M9.1 636.8h6.1M16.4 636.8h7.0M24.7 636.8h1.8M27.6 636.8h3.5M32.3 636.8h1.8M35.3 636.8h8.8M45.3 636.8h3.5M50.0 636.8h2.6M53.8 636.8h1.8M56.8 636.8h2.6M60.6 636.8h4.4M2.6 638.8h4.4M8.2 638.8h7.9M17.3 638.8h7.0M2.6 640.8h4.4M8.2 640.8h2.6M12.1 640.8h4.4M17.7 640.8h4.4M23.2 640.8h6.1M30.6 640.8h1.8M33.6 640.8h1.8M36.5 640.8h6.1M43.9 640.8h4.4M49.5 640.8h2.6M53.3 640.8h3.5M58.0 640.8h1.8M61.0 640.8h3.5M65.7 640.8h7.0M73.9 640.8h1.8M76.9 640.8h1.8M79.8 640.8h1.8M82.8 640.8h1.8M85.8 640.8h1.8M2.6 642.8h3.5M7.3 642.8h3.5M12.1 642.8h4.4M17.7 642.8h2.6M21.5 642.8h4.4M27.1 642.8h2.6M30.9 642.8h3.5M35.6 642.8h4.4M41.2 642.8h3.5M46.0 642.8h6.1M53.3 642.8h1.8M56.3 642.8h1.8M59.2 642.8h3.5M63.9 642.8h5.3M70.4 642.8h1.8M73.4 642.8h6.1M80.7 642.8h3.5M85.4 642.8h1.8M0.0 644.8h1.8M0.0 658.8h1.8M3.0 658.8h7.9M12.1 658.8h6.1M19.4 658.8h2.6M23.2 658.8h3.5M28.0 658.8h18.4M47.6 658.8h7.9M56.7 658.8h1.8M59.6 658.8h1.8M62.6 658.8h4.4M68.2 658.8h3.5M72.9 658.8h1.8M75.9 658.8h6.1M83.2 658.8h1.8M86.2 658.8h0.9M88.3 658.8h5.3M2.6 660.8h1.8M5.6 660.8h18.4M25.2 660.8h4.4M30.8 660.8h8.8M40.8 660.8h4.4M46.4 660.8h5.3M52.8 660.8h5.3M59.3 660.8h2.6M63.1 660.8h2.6M67.0 660.8h3.5M71.7 660.8h7.9M80.8 660.8h1.8M83.7 660.8h8.8M93.7 660.8h4.4M2.6 662.8h16.6M2.6 666.8h6.1M10.0 666.8h4.4M15.6 666.8h3.5M20.3 666.8h18.4M39.9 666.8h3.5M44.6 666.8h3.5M49.3 666.8h3.5M54.0 666.8h3.5M58.7 666.8h18.4M78.4 666.8h1.8M2.6 670.8h4.4M8.2 670.8h1.8M11.2 670.8h7.9M20.3 670.8h1.8M23.2 670.8h8.8M33.2 670.8h8.8M43.2 670.8h6.1M50.5 670.8h2.6M54.4 670.8h7.0M62.6 670.8h1.8M2.6 672.8h2.6M6.5 672.8h3.5M11.2 672.8h8.8M21.2 672.8h3.5M2.6 674.8h7.0M10.8 674.8h1.8M13.8 674.8h3.5M18.5 674.8h2.6M22.4 674.8h3.5M27.1 674.8h5.3M33.6 674.8h5.3M40.0 674.8h7.9M49.1 674.8h8.8M59.1 674.8h3.5M63.8 674.8h3.5M68.5 674.8h4.4M74.1 674.8h1.8M77.1 674.8h1.8M80.0 674.8h1.8M83.0 674.8h5.3M89.5 674.8h1.8M2.6 676.8h6.1M10.0 676.8h1.8M12.9 676.8h2.6M16.8 676.8h1.8M19.7 676.8h1.8M22.7 676.8h4.4M28.3 676.8h4.4M33.9 676.8h0.9M36.0 676.8h1.8M38.9 676.8h3.5M43.7 676.8h3.5M48.4 676.8h1.8M51.3 676.8h4.4M56.9 676.8h3.5M61.7 676.8h3.5M66.4 676.8h3.5M71.1 676.8h2.6M74.9 676.8h4.4M80.5 676.8h3.5M85.2 676.8h4.4M90.8 676.8h1.8M0.0 678.8h1.8M0.0 690.8h1.8M3.0 690.8h4.4M8.6 690.8h4.4M14.1 690.8h8.8M24.1 690.8h4.4M29.7 690.8h1.8M32.7 690.8h4.4M38.3 690.8h1.8M41.2 690.8h3.5M46.0 690.8h6.1M53.3 690.8h1.8M56.3 690.8h8.8M66.2 690.8h2.6M70.1 690.8h1.8M2.6 692.8h3.5M7.3 692.8h2.6M11.2 692.8h5.3M17.7 692.8h2.6M21.5 692.8h1.8M24.5 692.8h1.8M27.4 692.8h5.3M33.9 692.8h7.9M43.0 692.8h1.8M2.6 696.8h3.5M7.3 696.8h2.6M11.2 696.8h4.4M16.8 696.8h3.5M21.5 696.8h2.6M2.6 700.8h5.3M9.1 700.8h2.6M12.9 700.8h3.5M17.7 700.8h7.9M26.7 700.8h18.4M46.4 700.8h3.5M51.1 700.8h7.0M59.3 700.8h2.6M2.6 702.8h4.4M8.2 702.8h4.4M13.8 702.8h1.8M16.8 702.8h6.1M2.6 704.8h6.1M10.0 704.8h1.8M12.9 704.8h4.4M18.5 704.8h2.6M22.4 704.8h4.4M28.0 704.8h0.9M30.1 704.8h7.0M38.3 704.8h2.6M42.1 704.8h6.1M49.5 704.8h4.4M55.0 704.8h7.0M63.3 704.8h1.8M66.2 704.8h4.4M71.8 704.8h7.0M2.6 706.8h4.4M8.2 706.8h1.8M11.2 706.8h3.5M15.9 706.8h3.5M20.6 706.8h7.0M28.8 706.8h1.8M31.8 706.8h3.5M36.5 706.8h6.1M43.9 706.8h1.8M46.8 706.8h1.8M49.8 706.8h4.4M55.4 706.8h1.8M58.4 706.8h1.8M61.3 706.8h2.6M65.2 706.8h3.5M69.9 706.8h3.5M74.6 706.8h3.5M79.3 706.8h1.8M82.3 706.8h3.5M87.0 706.8h3.5M91.7 706.8h1.8M0.0 708.8h1.8M0.0 720.8h1.8M3.0 720.8h7.9M12.1 720.8h3.5M16.8 720.8h4.4M22.4 720.8h1.8M25.3 720.8h4.4M30.9 720.8h2.6M34.8 720.8h1.8M37.7 720.8h3.5M42.4 720.8h0.9M44.5 720.8h6.1M51.9 720.8h1.8M54.8 720.8h3.5M2.6 724.8h4.4M8.2 724.8h1.8M11.2 724.8h3.5M15.9 724.8h4.4M21.5 724.8h3.5M26.2 724.8h1.8M29.2 724.8h3.5M33.9 724.8h4.4M39.5 724.8h2.6M2.6 728.8h7.0M10.8 728.8h5.3M17.3 728.8h3.5M22.0 728.8h1.8M25.0 728.8h4.4M30.6 728.8h6.1M37.9 728.8h7.0M46.2 728.8h3.5M50.9 728.8h4.4M56.5 728.8h1.8M59.4 728.8h2.6M2.6 730.8h1.8M5.6 730.8h1.8M8.6 730.8h1.8M11.5 730.8h1.8M14.5 730.8h8.8M0.0 732.8h1.8M0.0 744.8h1.8M3.0 744.8h2.6M6.8 744.8h6.1M14.1 744.8h7.9M23.2 744.8h3.5M28.0 744.8h4.4M33.6 744.8h1.8M36.5 744.8h3.5M41.2 744.8h2.6M45.1 744.8h2.6M48.9 744.8h3.5M53.6 744.8h2.6M57.5 744.8h1.8M60.4 744.8h6.1M67.8 744.8h5.3M74.3 744.8h2.6M78.1 744.8h7.0M86.3 744.8h4.4M2.6 746.8h2.6M6.5 746.8h2.6M10.3 746.8h8.8M20.3 746.8h1.8M23.2 746.8h3.5M28.0 746.8h4.4M33.6 746.8h1.8M36.5 746.8h3.5M41.2 746.8h5.3M47.7 746.8h1.8M50.7 746.8h3.5M55.4 746.8h3.5M60.1 746.8h6.1M67.4 746.8h4.4M73.0 746.8h1.8M76.0 746.8h4.4M81.6 746.8h3.5M2.6 750.8h2.6M6.5 750.8h3.5M11.2 750.8h3.5M15.9 750.8h2.6M19.7 750.8h7.0M28.0 750.8h4.4M33.6 750.8h3.5M38.3 750.8h2.6M42.1 750.8h1.8M45.1 750.8h4.4M50.7 750.8h5.3M57.1 750.8h6.1M2.6 752.8h2.6M6.5 752.8h7.0M14.7 752.8h8.8M2.6 754.8h1.8M5.6 754.8h1.8M8.6 754.8h3.5M13.3 754.8h3.5M18.0 754.8h0.9M20.1 754.8h4.4M25.7 754.8h4.4M31.3 754.8h7.9M40.4 754.8h1.8M43.3 754.8h4.4M48.9 754.8h3.5M53.6 754.8h2.6M57.5 754.8h3.5M62.2 754.8h3.5M66.9 754.8h3.5M71.6 754.8h4.4M77.2 754.8h2.6M2.6 756.8h2.6M6.5 756.8h4.4M12.1 756.8h18.4M31.7 756.8h7.0M39.9 756.8h3.5M44.6 756.8h7.0M52.8 756.8h3.5M57.5 756.8h6.1M64.9 756.8h1.8M67.8 756.8h4.4M73.4 756.8h4.4M79.0 756.8h1.8M82.0 756.8h3.5M86.7 756.8h2.6M90.6 756.8h2.6M94.4 756.8h5.3M100.9 756.8h6.1M108.2 756.8h4.4M113.8 756.8h1.8M28.9 758.8h5.3M35.4 758.8h4.4M41.0 758.8h6.1M48.3 758.8h8.8M58.3 758.8h3.5M63.0 758.8h2.6M66.8 758.8h3.5M71.5 758.8h7.9M80.6 758.8h5.3M87.1 758.8h3.5M91.8 758.8h3.5M96.5 758.8h7.9M105.6 758.8h7.0M113.9 758.8h6.1M0.0 760.8h1.8M0.0 778.8h1.8M3.0 778.8h2.6M6.8 778.8h0.9M8.9 778.8h2.6M12.7 778.8h1.8M15.7 778.8h2.6M19.5 778.8h1.8M22.5 778.8h3.5M27.2 778.8h2.6M31.1 778.8h4.4M36.7 778.8h8.8M46.6 778.8h1.8M49.6 778.8h2.6M53.4 778.8h1.8M56.4 778.8h3.5M61.1 778.8h4.4M66.7 778.8h2.6M70.5 778.8h4.4M76.1 778.8h5.3M82.6 778.8h2.6M2.6 782.8h1.8M5.6 782.8h5.3M12.1 782.8h18.4M31.7 782.8h1.8M34.6 782.8h2.6M38.5 782.8h3.5M43.2 782.8h7.9M52.3 782.8h1.8M55.2 782.8h7.9M64.3 782.8h7.9M73.4 782.8h2.6M0.0 784.8h1.8M0.0 806.8h0.9M2.1 806.8h4.4M7.7 806.8h1.8M10.6 806.8h1.8M13.6 806.8h3.5M18.3 806.8h1.8M21.3 806.8h3.5M26.0 806.8h2.6M29.9 806.8h3.5M34.6 806.8h4.4M40.2 806.8h2.6M44.0 806.8h2.6M0.0 812.8h1.8M3.0 812.8h7.0M11.2 812.8h7.0M19.4 812.8h3.5M24.1 812.8h7.9M33.2 812.8h6.1M40.6 812.8h1.8M43.5 812.8h4.4M49.1 812.8h4.4M54.7 812.8h3.5M59.4 812.8h4.4M65.0 812.8h7.9M74.1 812.8h1.8M77.1 812.8h2.6M80.9 812.8h3.5M2.6 816.8h3.5M7.3 816.8h6.1M14.7 816.8h2.6M18.5 816.8h5.3M25.0 816.8h7.9M34.1 816.8h7.0M2.6 818.8h2.6M6.5 818.8h3.5M11.2 818.8h6.1M18.5 818.8h7.9M27.6 818.8h6.1M35.0 818.8h3.5M39.7 818.8h1.8M42.6 818.8h2.6M46.5 818.8h1.8M49.5 818.8h3.5M54.2 818.8h2.6M58.0 818.8h1.8M61.0 818.8h1.8M63.9 818.8h3.5M68.7 818.8h1.8M71.6 818.8h4.4M0.0 820.8h1.8M0.0 842.8h0.9M2.1 842.8h3.5M6.8 842.8h2.6M10.6 842.8h4.4M16.2 842.8h2.6M20.1 842.8h4.4M25.7 842.8h2.6M29.5 842.8h4.4M35.1 842.8h4.4M40.7 842.8h2.6M44.5 842.8h2.6M48.4 842.8h4.4M54.0 842.8h7.0M62.2 842.8h4.4M0.0 850.8h1.8M3.0 850.8h3.5M7.7 850.8h6.1M15.0 850.8h8.8M25.0 850.8h4.4M30.6 850.8h7.0M38.8 850.8h1.8M41.8 850.8h3.5M46.5 850.8h1.8M49.5 850.8h5.3M55.9 850.8h1.8M58.9 850.8h4.4M64.5 850.8h2.6M68.3 850.8h4.4M73.9 850.8h4.4M79.5 850.8h1.8M82.5 850.8h3.5M2.6 852.8h4.4M8.2 852.8h4.4M13.8 852.8h1.8M16.8 852.8h3.5M21.5 852.8h7.9M30.6 852.8h2.6M34.4 852.8h1.8M37.4 852.8h1.8M40.4 852.8h1.8M43.3 852.8h1.8M46.3 852.8h2.6M2.6 856.8h1.8M5.6 856.8h1.8M8.6 856.8h2.6M12.4 856.8h4.4M18.0 856.8h1.8M21.0 856.8h4.4M26.5 856.8h4.4M32.1 856.8h2.6M36.0 856.8h6.1M43.3 856.8h6.1M50.7 856.8h2.6M54.5 856.8h1.8M57.5 856.8h1.8M60.4 856.8h2.6M64.3 856.8h3.5M69.0 856.8h2.6M72.8 856.8h2.6M0.0 858.8h1.8M0.0 880.8h0.9M2.1 880.8h4.4M7.7 880.8h4.4M13.3 880.8h3.5M18.0 880.8h4.4M23.6 880.8h7.9M32.7 880.8h6.1M40.0 880.8h6.1M0.0 888.8h1.8M3.0 888.8h3.5M7.7 888.8h7.0M15.9 888.8h3.5M20.6 888.8h4.4M26.2 888.8h3.5M30.9 888.8h3.5M35.6 888.8h6.1M43.0 888.8h3.5M47.7 888.8h1.8M50.7 888.8h3.5M55.4 888.8h3.5M60.1 888.8h1.8M63.1 888.8h4.4M68.7 888.8h6.1M76.0 888.8h4.4M81.6 888.8h4.4M87.2 888.8h2.6M2.6 890.8h4.4M8.2 890.8h7.0M16.4 890.8h2.6M20.3 890.8h4.4M25.9 890.8h3.5M30.6 890.8h4.4M36.2 890.8h3.5M40.9 890.8h2.6M44.7 890.8h3.5M2.6 894.8h3.5M7.3 894.8h3.5M12.1 894.8h6.1M19.4 894.8h1.8M22.4 894.8h7.0M30.6 894.8h2.6M34.4 894.8h2.6M38.3 894.8h1.8M41.2 894.8h2.6M2.6 896.8h3.5M7.3 896.8h2.6M11.2 896.8h3.5M15.9 896.8h0.9M18.0 896.8h4.4M23.6 896.8h0.9M25.7 896.8h1.8M28.6 896.8h0.9M30.7 896.8h7.0M38.9 896.8h3.5M43.7 896.8h1.8M46.6 896.8h3.5M51.3 896.8h3.5M56.1 896.8h1.8M59.0 896.8h6.1M66.4 896.8h6.1M73.7 896.8h2.6M0.0 898.8h1.8M0.0 920.8h0.9M2.1 920.8h0.9M4.2 920.8h1.8M7.1 920.8h2.6M11.0 920.8h2.6M14.8 920.8h3.5M19.5 920.8h0.9M21.6 920.8h5.3M28.1 920.8h4.4M33.7 920.8h2.6M37.5 920.8h3.5M42.2 920.8h3.5M47.0 920.8h4.4M0.0 926.8h1.8M2.6 928.8h4.4M8.2 928.8h7.9M17.3 928.8h0.9M19.4 928.8h2.6M23.2 928.8h1.8M26.2 928.8h6.1M33.6 928.8h1.8M36.5 928.8h3.5M41.2 928.8h7.0M49.5 928.8h1.8M52.4 928.8h2.6M56.3 928.8h10.5M0.0 930.8h1.8M0.0 1058.8h1.8M2.6 1060.8h8.8M12.6 1060.8h3.5M17.3 1060.8h7.0M25.5 1060.8h7.9M34.6 1060.8h4.4M40.2 1060.8h1.8M43.2 1060.8h6.1M50.5 1060.8h3.5M55.2 1060.8h3.5M60.0 1060.8h7.0M68.2 1060.8h2.6M72.0 1060.8h1.8M75.0 1060.8h1.8M78.0 1060.8h4.4M83.5 1060.8h2.6M87.4 1060.8h4.4M2.6 1062.8h3.5M7.3 1062.8h2.6M11.2 1062.8h3.5M15.9 1062.8h3.5M20.6 1062.8h7.9M29.7 1062.8h1.8M2.6 1066.8h7.0M10.8 1066.8h3.5M15.6 1066.8h2.6M19.4 1066.8h5.3M25.9 1066.8h6.1M33.2 1066.8h4.4M38.8 1066.8h5.3M45.3 1066.8h3.5M50.0 1066.8h1.8M53.0 1066.8h7.0M61.2 1066.8h6.1M68.5 1066.8h3.5M73.2 1066.8h7.0M81.5 1066.8h4.4M87.0 1066.8h3.5M91.8 1066.8h3.5M2.6 1068.8h7.9M11.7 1068.8h2.6M15.6 1068.8h1.8M18.5 1068.8h1.8M21.5 1068.8h6.1M28.8 1068.8h3.5M33.6 1068.8h1.8M0.0 1070.8h1.8"/>
<path stroke="#66d9ef" stroke-opacity="0.7" d="M0.0 118.8h2.6M22.6 118.8h3.5M34.6 118.8h5.3M49.3 118.8h2.6M0.0 120.8h4.4M26.1 120.8h3.5M38.1 120.8h5.3M52.8 120.8h4.4M0.0 122.8h5.3M27.8 122.8h3.5M39.9 122.8h5.3M54.6 122.8h5.3M24.3 124.8h3.5M36.4 124.8h5.3M51.1 124.8h3.5M0.0 142.8h3.5M25.2 142.8h3.5M37.3 142.8h5.3M0.0 144.8h3.5M26.9 144.8h3.5M39.0 144.8h5.3M0.0 146.8h3.5M27.8 146.8h3.5M39.9 146.8h5.3M0.0 148.8h3.5M26.1 148.8h3.5M38.1 148.8h5.3M0.0 164.8h3.5M23.4 164.8h3.5M35.5 164.8h5.3M0.0 166.8h3.5M25.2 166.8h3.5M37.3 166.8h5.3M0.0 168.8h3.5M26.1 168.8h3.5M38.1 168.8h5.3M0.0 170.8h3.5M24.3 170.8h3.5M36.4 170.8h5.3M0.0 188.8h2.6M22.6 188.8h3.5M34.6 188.8h5.3M49.3 188.8h2.6M0.0 190.8h4.4M26.1 190.8h3.5M38.1 190.8h5.3M52.8 190.8h4.4M0.0 192.8h5.3M27.8 192.8h3.5M39.9 192.8h5.3M54.6 192.8h5.3M24.3 194.8h3.5M36.4 194.8h5.3M51.1 194.8h3.5M0.0 212.8h2.6M24.3 212.8h3.5M36.4 212.8h5.3M51.1 212.8h2.6M0.0 214.8h4.4M27.8 214.8h3.5M39.9 214.8h5.3M54.6 214.8h4.4M0.0 216.8h5.3M29.6 216.8h3.5M41.6 216.8h5.3M56.3 216.8h5.3M26.1 218.8h3.5M38.1 218.8h5.3M52.8 218.8h3.5M0.0 238.8h2.6M25.2 238.8h3.5M37.3 238.8h5.3M51.9 238.8h2.6M0.0 240.8h4.4M28.7 240.8h3.5M40.8 240.8h5.3M55.4 240.8h4.4M0.0 264.8h2.6M21.7 264.8h3.5M33.8 264.8h5.3M48.4 264.8h2.6M58.7 264.8h3.5M0.0 266.8h4.4M25.2 266.8h3.5M37.3 266.8h5.3M51.9 266.8h4.4M64.0 266.8h3.5M0.0 268.8h5.3M26.9 268.8h3.5M39.0 268.8h5.3M53.7 268.8h5.3M66.6 268.8h3.5M23.4 270.8h3.5M35.5 270.8h5.3M50.2 270.8h3.5M61.4 270.8h3.5M0.0 288.8h2.6M21.7 288.8h3.5M33.8 288.8h5.3M48.4 288.8h2.6M0.0 290.8h4.4M25.2 290.8h3.5M37.3 290.8h5.3M51.9 290.8h2.6M0.0 292.8h5.3M26.9 292.8h3.5M39.0 292.8h5.3M53.7 292.8h2.6M23.4 294.8h3.5M35.5 294.8h5.3M50.2 294.8h2.6M0.0 314.8h2.6M21.7 314.8h3.5M33.8 314.8h5.3M48.4 314.8h2.6M58.7 314.8h2.6M0.0 316.8h4.4M25.2 316.8h3.5M37.3 316.8h5.3M51.9 316.8h2.6M62.3 316.8h4.4M0.0 318.8h5.3M26.9 318.8h3.5M39.0 318.8h5.3M53.7 318.8h2.6M64.0 318.8h5.3M23.4 320.8h3.5M35.5 320.8h5.3M50.2 320.8h2.6M60.5 320.8h3.5M0.0 340.8h2.6M23.4 340.8h3.5M35.5 340.8h5.3M50.2 340.8h2.6M60.5 340.8h2.6M0.0 342.8h4.4M26.9 342.8h3.5M39.0 342.8h5.3M53.7 342.8h2.6M64.0 342.8h4.4M0.0 344.8h5.3M28.7 344.8h3.5M40.8 344.8h5.3M55.4 344.8h2.6M65.8 344.8h5.3M25.2 346.8h3.5M37.3 346.8h5.3M51.9 346.8h2.6M62.3 346.8h3.5M0.0 360.8h2.6M23.4 360.8h3.5M35.5 360.8h5.3M0.0 362.8h4.4M26.9 362.8h3.5M39.0 362.8h5.3M0.0 364.8h5.3M28.7 364.8h3.5M40.8 364.8h5.3M25.2 366.8h3.5M37.3 366.8h5.3M0.0 380.8h2.6M21.7 380.8h3.5M33.8 380.8h5.3M0.0 382.8h4.4M25.2 382.8h3.5M37.3 382.8h5.3M0.0 384.8h5.3M26.9 384.8h3.5M39.0 384.8h5.3M23.4 386.8h3.5M35.5 386.8h5.3M0.0 408.8h2.6M24.3 408.8h3.5M36.4 408.8h5.3M51.1 408.8h2.6M61.4 408.8h2.6M0.0 410.8h4.4M27.8 410.8h3.5M39.9 410.8h5.3M54.6 410.8h2.6M64.9 410.8h4.4M0.0 430.8h3.5M25.2 430.8h3.5M37.3 430.8h5.3M51.9 430.8h2.6M62.3 430.8h2.6M0.0 432.8h3.5M26.9 432.8h3.5M39.0 432.8h5.3M53.7 432.8h2.6M64.0 432.8h4.4M0.0 434.8h3.5M27.8 434.8h3.5M39.9 434.8h5.3M54.6 434.8h2.6M64.9 434.8h5.3M0.0 436.8h3.5M26.1 436.8h3.5M38.1 436.8h5.3M52.8 436.8h2.6M63.1 436.8h3.5M0.0 458.8h2.6M24.3 458.8h3.5M36.4 458.8h5.3M51.1 458.8h2.6M61.4 458.8h3.5M0.0 460.8h2.6M26.1 460.8h3.5M38.1 460.8h5.3M52.8 460.8h4.4M64.9 460.8h3.5M0.0 462.8h2.6M26.9 462.8h3.5M39.0 462.8h5.3M53.7 462.8h5.3M66.6 462.8h3.5M0.0 464.8h2.6M25.2 464.8h3.5M37.3 464.8h5.3M51.9 464.8h3.5M63.1 464.8h3.5M0.0 482.8h2.6M23.4 482.8h3.5M35.5 482.8h5.3M0.0 484.8h2.6M25.2 484.8h3.5M37.3 484.8h5.3M0.0 486.8h2.6M26.1 486.8h3.5M38.1 486.8h5.3M0.0 488.8h2.6M24.3 488.8h3.5M36.4 488.8h5.3M0.0 506.8h3.5M26.9 506.8h3.5M39.0 506.8h5.3M53.7 506.8h2.6M0.0 508.8h3.5M28.7 508.8h3.5M40.8 508.8h5.3M55.4 508.8h2.6M0.0 510.8h3.5M29.6 510.8h3.5M41.6 510.8h5.3M56.3 510.8h2.6M0.0 512.8h3.5M27.8 512.8h3.5M39.9 512.8h5.3M54.6 512.8h2.6M0.0 526.8h2.6M23.4 526.8h3.5M35.5 526.8h5.3M0.0 528.8h2.6M25.2 528.8h3.5M37.3 528.8h5.3M0.0 530.8h2.6M26.1 530.8h3.5M38.1 530.8h5.3M0.0 532.8h2.6M24.3 532.8h3.5M36.4 532.8h5.3M0.0 550.8h2.6M27.8 550.8h3.5M39.9 550.8h5.3M54.6 550.8h2.6M64.9 550.8h3.5M0.0 552.8h2.6M29.6 552.8h3.5M41.6 552.8h5.3M56.3 552.8h4.4M68.4 552.8h3.5M0.0 554.8h2.6M30.5 554.8h3.5M42.5 554.8h5.3M57.2 554.8h5.3M70.1 554.8h3.5M0.0 556.8h2.6M28.7 556.8h3.5M40.8 556.8h5.3M55.4 556.8h3.5M66.6 556.8h3.5M0.0 574.8h2.6M22.6 574.8h3.5M34.6 574.8h5.3M49.3 574.8h2.6M0.0 576.8h2.6M24.3 576.8h3.5M36.4 576.8h5.3M51.1 576.8h4.4M0.0 578.8h2.6M25.2 578.8h3.5M37.3 578.8h5.3M51.9 578.8h5.3M0.0 580.8h2.6M23.4 580.8h3.5M35.5 580.8h5.3M50.2 580.8h3.5M0.0 598.8h3.5M22.6 598.8h3.5M34.6 598.8h5.3M49.3 598.8h2.6M0.0 600.8h3.5M24.3 600.8h3.5M36.4 600.8h5.3M51.1 600.8h4.4M0.0 602.8h3.5M25.2 602.8h3.5M37.3 602.8h5.3M51.9 602.8h5.3M0.0 604.8h3.5M23.4 604.8h3.5M35.5 604.8h5.3M50.2 604.8h3.5M18.7 618.8h3.5M30.8 618.8h5.3M20.5 620.8h3.5M32.5 620.8h5.3M21.4 622.8h3.5M33.4 622.8h5.3M19.6 624.8h3.5M31.7 624.8h5.3M19.6 646.8h3.5M31.7 646.8h5.3M46.4 646.8h4.4M58.4 646.8h2.6M21.4 648.8h3.5M33.4 648.8h5.3M48.1 648.8h6.1M61.9 648.8h2.6M22.2 650.8h3.5M34.3 650.8h5.3M49.0 650.8h7.0M63.7 650.8h2.6M20.5 652.8h3.5M32.5 652.8h5.3M47.2 652.8h5.3M60.2 652.8h2.6M0.0 680.8h2.6M24.3 680.8h3.5M36.4 680.8h5.3M51.1 680.8h2.6M64.0 680.8h2.6M0.0 682.8h2.6M26.1 682.8h3.5M38.1 682.8h5.3M52.8 682.8h2.6M65.8 682.8h4.4M0.0 684.8h2.6M26.9 684.8h3.5M39.0 684.8h5.3M53.7 684.8h2.6M66.6 684.8h5.3M0.0 686.8h2.6M25.2 686.8h3.5M37.3 686.8h5.3M51.9 686.8h2.6M64.9 686.8h3.5M0.0 710.8h3.5M23.4 710.8h3.5M35.5 710.8h5.3M50.2 710.8h4.4M0.0 712.8h3.5M25.2 712.8h3.5M37.3 712.8h5.3M51.9 712.8h6.1M0.0 714.8h3.5M26.1 714.8h3.5M38.1 714.8h5.3M52.8 714.8h7.0M0.0 716.8h3.5M24.3 716.8h3.5M36.4 716.8h5.3M51.1 716.8h5.3M0.0 734.8h4.4M26.9 734.8h3.5M39.0 734.8h5.3M0.0 736.8h6.1M30.5 736.8h3.5M42.5 736.8h5.3M0.0 738.8h7.0M32.2 738.8h3.5M44.3 738.8h5.3M28.7 740.8h3.5M40.8 740.8h5.3M34.0 762.8h3.5M46.0 762.8h5.3M60.7 762.8h4.4M78.0 762.8h3.5M33.1 766.8h3.5M45.1 766.8h5.3M59.8 766.8h2.6M74.5 766.8h3.5M2.6 768.8h4.4M25.0 768.8h2.6M0.0 786.8h2.6M29.6 786.8h5.3M0.0 788.8h2.6M31.3 788.8h5.3M0.0 790.8h2.6M32.2 790.8h5.3M0.0 792.8h2.6M30.5 792.8h5.3M0.0 796.8h2.6M28.7 796.8h5.3M0.0 798.8h2.6M30.5 798.8h5.3M0.0 800.8h2.6M31.3 800.8h5.3M0.0 802.8h2.6M29.6 802.8h5.3M0.0 808.8h2.6M25.2 808.8h5.3M0.0 822.8h2.6M32.2 822.8h3.5M44.3 822.8h5.3M0.0 824.8h2.6M34.0 824.8h3.5M46.0 824.8h5.3M0.0 826.8h2.6M34.8 826.8h3.5M46.9 826.8h5.3M0.0 828.8h2.6M33.1 828.8h3.5M45.1 828.8h5.3M0.0 832.8h2.6M31.3 832.8h3.5M43.4 832.8h5.3M0.0 834.8h2.6M33.1 834.8h3.5M45.1 834.8h5.3M0.0 836.8h2.6M34.0 836.8h3.5M46.0 836.8h5.3M0.0 838.8h2.6M32.2 838.8h3.5M44.3 838.8h5.3M0.0 844.8h2.6M27.8 844.8h3.5M39.9 844.8h5.3M0.0 860.8h2.6M29.6 860.8h5.3M0.0 862.8h2.6M31.3 862.8h5.3M0.0 864.8h2.6M32.2 864.8h5.3M0.0 866.8h2.6M30.5 866.8h5.3M0.0 870.8h2.6M28.7 870.8h5.3M0.0 872.8h2.6M30.5 872.8h5.3M0.0 874.8h2.6M31.3 874.8h5.3M0.0 876.8h2.6M29.6 876.8h5.3M0.0 882.8h2.6M25.2 882.8h5.3M0.0 900.8h2.6M32.2 900.8h3.5M44.3 900.8h5.3M0.0 902.8h2.6M34.0 902.8h3.5M46.0 902.8h5.3M0.0 904.8h2.6M34.8 904.8h3.5M46.9 904.8h5.3M0.0 906.8h2.6M33.1 906.8h3.5M45.1 906.8h5.3M0.0 910.8h2.6M31.3 910.8h3.5M43.4 910.8h5.3M0.0 912.8h2.6M33.1 912.8h3.5M45.1 912.8h5.3M0.0 914.8h2.6M34.0 914.8h3.5M46.0 914.8h5.3M0.0 916.8h2.6M32.2 916.8h3.5M44.3 916.8h5.3M0.0 922.8h2.6M27.8 922.8h3.5M39.9 922.8h5.3M24.9 934.8h3.5M0.0 940.8h2.6M0.0 962.8h5.3M33.1 962.8h2.6M0.0 964.8h5.3M34.0 964.8h2.6M0.0 966.8h5.3M35.7 966.8h2.6M0.0 968.8h5.3M36.6 968.8h2.6M0.0 970.8h5.3M38.3 970.8h2.6M0.0 972.8h5.3M39.2 972.8h2.6M0.0 974.8h5.3M40.1 974.8h2.6M0.0 976.8h5.3M41.8 976.8h2.6M0.0 980.8h2.6M0.0 982.8h2.6M0.0 984.8h2.6M0.0 986.8h2.6M0.0 988.8h2.6M0.0 990.8h2.6M0.0 992.8h2.6M0.0 994.8h2.6M29.6 998.8h2.6M30.5 1000.8h2.6M31.3 1002.8h2.6M32.2 1004.8h2.6M33.1 1006.8h2.6M34.0 1008.8h2.6M34.8 1010.8h2.6M35.7 1012.8h2.6M0.0 1016.8h2.6M29.6 1016.8h3.5M0.0 1018.8h2.6M30.5 1018.8h3.5M0.0 1020.8h2.6M32.2 1020.8h3.5M0.0 1022.8h2.6M34.0 1022.8h3.5M0.0 1024.8h2.6M34.8 1024.8h3.5M0.0 1026.8h2.6M35.7 1026.8h3.5M0.0 1028.8h2.6M37.5 1028.8h3.5M0.0 1030.8h2.6M39.2 1030.8h3.5M0.0 1034.8h5.3M29.6 1034.8h3.5M41.6 1034.8h2.6M0.0 1036.8h5.3M31.3 1036.8h3.5M43.4 1036.8h2.6M0.0 1038.8h5.3M32.2 1038.8h3.5M44.3 1038.8h2.6M0.0 1040.8h5.3M33.1 1040.8h3.5M45.1 1040.8h2.6M0.0 1042.8h5.3M34.8 1042.8h3.5M46.9 1042.8h2.6M0.0 1044.8h5.3M36.6 1044.8h3.5M48.6 1044.8h2.6M0.0 1046.8h5.3M37.5 1046.8h3.5M49.5 1046.8h2.6M0.0 1048.8h5.3M38.3 1048.8h3.5M50.4 1048.8h2.6M0.0 1076.8h2.6M26.1 1076.8h5.3M40.8 1076.8h2.6M0.0 1082.8h4.4M29.6 1082.8h5.3M44.3 1082.8h4.4M0.0 1088.8h5.3M31.3 1088.8h5.3M46.0 1088.8h5.3M27.8 1094.8h5.3M42.5 1094.8h3.5M0.0 1102.8h2.6M28.7 1102.8h5.3M43.4 1102.8h2.6M0.0 1108.8h4.4M32.2 1108.8h5.3M46.9 1108.8h4.4M0.0 1116.8h3.5M28.7 1116.8h5.3M0.0 1122.8h3.5M30.5 1122.8h5.3M0.0 1128.8h3.5M31.3 1128.8h5.3M0.0 1134.8h3.5M29.6 1134.8h5.3M0.0 1142.8h3.5M26.9 1142.8h5.3M0.0 1148.8h3.5M28.7 1148.8h5.3M0.0 1154.8h3.5M29.6 1154.8h5.3M0.0 1160.8h3.5M27.8 1160.8h5.3M0.0 1168.8h2.6M26.1 1168.8h5.3M40.8 1168.8h2.6M0.0 1174.8h4.4M29.6 1174.8h5.3M44.3 1174.8h4.4M0.0 1180.8h5.3M31.3 1180.8h5.3M46.0 1180.8h5.3M27.8 1186.8h5.3M42.5 1186.8h3.5M0.0 1194.8h2.6M25.2 1194.8h5.3M39.9 1194.8h2.6M50.2 1194.8h3.5M0.0 1200.8h2.6M26.9 1200.8h5.3M41.6 1200.8h4.4M53.7 1200.8h3.5M0.0 1206.8h2.6M27.8 1206.8h5.3M42.5 1206.8h5.3M55.4 1206.8h3.5M0.0 1212.8h2.6M26.1 1212.8h5.3M40.8 1212.8h3.5M51.9 1212.8h3.5M0.0 1220.8h2.6M27.8 1220.8h5.3M42.5 1220.8h2.6M52.8 1220.8h2.6M0.0 1226.8h4.4M31.3 1226.8h5.3M46.0 1226.8h2.6M56.3 1226.8h4.4M0.0 1234.8h2.6M27.8 1234.8h5.3M42.5 1234.8h2.6M52.8 1234.8h3.5M0.0 1240.8h2.6M29.6 1240.8h5.3M44.3 1240.8h4.4M56.3 1240.8h3.5M0.0 1246.8h2.6M30.5 1246.8h5.3M45.1 1246.8h5.3M58.1 1246.8h3.5M0.0 1252.8h2.6M28.7 1252.8h5.3M43.4 1252.8h3.5M54.6 1252.8h3.5M0.0 1260.8h2.6M25.2 1260.8h5.3M39.9 1260.8h2.6M0.0 1266.8h4.4M28.7 1266.8h5.3M43.4 1266.8h2.6M0.0 1272.8h5.3M30.5 1272.8h5.3M45.1 1272.8h2.6M26.9 1278.8h5.3M41.6 1278.8h2.6M0.0 1286.8h2.6M25.2 1286.8h5.3M39.9 1286.8h2.6M50.2 1286.8h2.6M0.0 1292.8h4.4M28.7 1292.8h5.3M43.4 1292.8h2.6M53.7 1292.8h4.4M0.0 1298.8h5.3M30.5 1298.8h5.3M45.1 1298.8h2.6M55.4 1298.8h5.3"/>
<path stroke="#f92672" stroke-opacity="0.7" d="M3.8 118.8h7.0M59.6 118.8h5.3M66.1 118.8h5.3M5.6 120.8h7.0M64.9 120.8h5.3M71.3 120.8h5.3M6.5 122.8h7.0M67.5 122.8h5.3M74.0 122.8h5.3M4.7 124.8h7.0M62.3 124.8h5.3M68.7 124.8h5.3M4.7 142.8h7.0M51.9 142.8h5.3M58.4 142.8h5.3M4.7 144.8h7.0M53.7 144.8h5.3M60.2 144.8h5.3M4.7 146.8h7.0M54.6 146.8h5.3M61.0 146.8h5.3M4.7 148.8h7.0M52.8 148.8h5.3M59.3 148.8h5.3M4.7 164.8h7.0M50.2 164.8h5.3M56.7 164.8h5.3M4.7 166.8h7.0M51.9 166.8h5.3M58.4 166.8h5.3M4.7 168.8h7.0M52.8 168.8h5.3M59.3 168.8h5.3M4.7 170.8h7.0M51.1 170.8h5.3M57.5 170.8h5.3M3.8 188.8h7.0M60.5 188.8h0.9M65.6 188.8h5.3M72.0 188.8h5.3M5.6 190.8h7.0M65.8 190.8h0.9M72.6 190.8h5.3M79.0 190.8h5.3M6.5 192.8h7.0M68.4 192.8h0.9M74.3 192.8h5.3M80.8 192.8h5.3M4.7 194.8h7.0M63.1 194.8h0.9M70.8 194.8h5.3M77.3 194.8h5.3M3.8 212.8h7.0M62.3 212.8h0.9M67.3 212.8h5.3M73.8 212.8h5.3M5.6 214.8h7.0M67.5 214.8h0.9M72.6 214.8h5.3M79.0 214.8h5.3M6.5 216.8h7.0M70.1 216.8h0.9M75.2 216.8h5.3M81.7 216.8h5.3M4.7 218.8h7.0M64.9 218.8h0.9M69.9 218.8h5.3M76.4 218.8h5.3M3.8 238.8h7.0M63.1 238.8h5.3M69.6 238.8h5.3M5.6 240.8h7.0M68.4 240.8h5.3M74.9 240.8h5.3M3.8 264.8h7.0M76.9 264.8h0.9M84.6 264.8h5.3M91.1 264.8h5.3M5.6 266.8h7.0M82.2 266.8h0.9M89.9 266.8h5.3M96.3 266.8h5.3M6.5 268.8h7.0M84.8 268.8h0.9M92.5 268.8h5.3M99.0 268.8h5.3M4.7 270.8h7.0M79.6 270.8h0.9M87.2 270.8h5.3M93.7 270.8h5.3M3.8 288.8h7.0M58.7 288.8h5.3M65.2 288.8h5.3M5.6 290.8h7.0M62.3 290.8h5.3M68.7 290.8h5.3M6.5 292.8h7.0M64.0 292.8h5.3M70.5 292.8h5.3M4.7 294.8h7.0M60.5 294.8h5.3M67.0 294.8h5.3M3.8 314.8h7.0M69.1 314.8h5.3M75.5 314.8h5.3M5.6 316.8h7.0M74.3 316.8h5.3M80.8 316.8h5.3M6.5 318.8h7.0M76.9 318.8h5.3M83.4 318.8h5.3M4.7 320.8h7.0M71.7 320.8h5.3M78.2 320.8h5.3M3.8 340.8h7.0M72.6 340.8h5.3M79.0 340.8h5.3M5.6 342.8h7.0M77.8 342.8h5.3M84.3 342.8h5.3M6.5 344.8h7.0M80.4 344.8h5.3M86.9 344.8h5.3M4.7 346.8h7.0M75.2 346.8h5.3M81.7 346.8h5.3M3.8 360.8h7.0M50.2 360.8h5.3M56.7 360.8h5.3M5.6 362.8h7.0M53.7 362.8h5.3M60.2 362.8h5.3M6.5 364.8h7.0M55.4 364.8h5.3M61.9 364.8h5.3M4.7 366.8h7.0M51.9 366.8h5.3M58.4 366.8h5.3M3.8 380.8h7.0M48.4 380.8h5.3M54.9 380.8h5.3M5.6 382.8h7.0M51.9 382.8h5.3M58.4 382.8h5.3M6.5 384.8h7.0M53.7 384.8h5.3M60.2 384.8h5.3M4.7 386.8h7.0M50.2 386.8h5.3M56.7 386.8h5.3M3.8 408.8h7.0M72.6 408.8h5.3M79.0 408.8h5.3M5.6 410.8h7.0M77.8 410.8h5.3M84.3 410.8h5.3M4.7 430.8h7.0M72.6 430.8h5.3M79.0 430.8h5.3M4.7 432.8h7.0M76.1 432.8h5.3M82.5 432.8h5.3M4.7 434.8h7.0M77.8 434.8h5.3M84.3 434.8h5.3M4.7 436.8h7.0M74.3 436.8h5.3M80.8 436.8h5.3M3.8 458.8h7.0M77.8 458.8h0.9M86.4 458.8h5.3M92.8 458.8h5.3M3.8 460.8h7.0M81.3 460.8h0.9M89.9 460.8h5.3M96.3 460.8h5.3M3.8 462.8h7.0M83.1 462.8h0.9M91.6 462.8h5.3M98.1 462.8h5.3M3.8 464.8h7.0M79.6 464.8h0.9M88.1 464.8h5.3M94.6 464.8h5.3M3.8 482.8h7.0M50.2 482.8h5.3M56.7 482.8h5.3M3.8 484.8h7.0M51.9 484.8h5.3M58.4 484.8h5.3M3.8 486.8h7.0M52.8 486.8h5.3M59.3 486.8h5.3M3.8 488.8h7.0M51.1 488.8h5.3M57.5 488.8h5.3M4.7 506.8h7.0M64.0 506.8h5.3M70.5 506.8h5.3M4.7 508.8h7.0M65.8 508.8h5.3M72.2 508.8h5.3M4.7 510.8h7.0M66.6 510.8h5.3M73.1 510.8h5.3M4.7 512.8h7.0M64.9 512.8h5.3M71.3 512.8h5.3M3.8 526.8h7.0M50.2 526.8h5.3M56.7 526.8h5.3M3.8 528.8h7.0M51.9 528.8h5.3M58.4 528.8h5.3M3.8 530.8h7.0M52.8 530.8h5.3M59.3 530.8h5.3M3.8 532.8h7.0M51.1 532.8h5.3M57.5 532.8h5.3M3.8 550.8h7.0M76.9 550.8h0.9M85.5 550.8h5.3M92.0 550.8h5.3M3.8 552.8h7.0M80.4 552.8h0.9M89.0 552.8h5.3M95.5 552.8h5.3M3.8 554.8h7.0M82.2 554.8h0.9M90.8 554.8h5.3M97.2 554.8h5.3M3.8 556.8h7.0M78.7 556.8h0.9M87.2 556.8h5.3M93.7 556.8h5.3M3.8 574.8h7.0M59.6 574.8h5.3M66.1 574.8h5.3M3.8 576.8h7.0M63.1 576.8h5.3M69.6 576.8h5.3M3.8 578.8h7.0M64.9 578.8h5.3M71.3 578.8h5.3M3.8 580.8h7.0M61.4 580.8h5.3M67.8 580.8h5.3M4.7 598.8h7.0M59.6 598.8h5.3M66.1 598.8h5.3M4.7 600.8h7.0M63.1 600.8h5.3M69.6 600.8h5.3M4.7 602.8h7.0M64.9 602.8h5.3M71.3 602.8h5.3M4.7 604.8h7.0M61.4 604.8h5.3M67.8 604.8h5.3M0.0 618.8h7.0M45.5 618.8h5.3M51.9 618.8h5.3M0.0 620.8h7.0M47.2 620.8h5.3M53.7 620.8h5.3M0.0 622.8h7.0M48.1 622.8h5.3M54.6 622.8h5.3M0.0 624.8h7.0M46.4 624.8h5.3M52.8 624.8h5.3M0.0 646.8h7.0M72.2 646.8h0.9M77.3 646.8h5.3M83.7 646.8h5.3M0.0 648.8h7.0M75.7 648.8h0.9M80.8 648.8h5.3M87.2 648.8h5.3M0.0 650.8h7.0M77.5 650.8h0.9M82.5 650.8h5.3M89.0 650.8h5.3M0.0 652.8h7.0M74.0 652.8h0.9M79.0 652.8h5.3M85.5 652.8h5.3M3.8 680.8h7.0M74.3 680.8h0.9M79.4 680.8h5.3M85.8 680.8h5.3M3.8 682.8h7.0M77.8 682.8h0.9M82.9 682.8h5.3M89.3 682.8h5.3M3.8 684.8h7.0M79.6 684.8h0.9M84.6 684.8h5.3M91.1 684.8h5.3M3.8 686.8h7.0M76.1 686.8h0.9M81.1 686.8h5.3M87.6 686.8h5.3M4.7 710.8h7.0M61.4 710.8h5.3M67.8 710.8h5.3M4.7 712.8h7.0M64.9 712.8h5.3M71.3 712.8h5.3M4.7 714.8h7.0M66.6 714.8h5.3M73.1 714.8h5.3M4.7 716.8h7.0M63.1 716.8h5.3M69.6 716.8h5.3M5.6 734.8h7.0M53.7 734.8h5.3M60.2 734.8h5.3M7.3 736.8h7.0M57.2 736.8h5.3M63.7 736.8h5.3M8.2 738.8h7.0M58.9 738.8h5.3M65.4 738.8h5.3M6.5 740.8h7.0M55.4 740.8h5.3M61.9 740.8h5.3M6.5 762.8h7.0M96.2 762.8h0.9M103.9 762.8h5.3M110.4 762.8h5.3M6.5 766.8h7.0M92.7 766.8h0.9M100.4 766.8h5.3M19.1 768.8h0.9M21.2 768.8h2.6M16.1 770.8h0.9M2.6 772.8h5.3M0.0 774.8h9.6M3.8 786.8h7.0M46.0 786.8h5.3M52.5 786.8h5.3M3.8 788.8h7.0M47.8 788.8h5.3M54.2 788.8h5.3M3.8 790.8h7.0M48.6 790.8h5.3M55.1 790.8h5.3M3.8 792.8h7.0M46.9 792.8h5.3M53.4 792.8h5.3M3.8 796.8h7.0M45.1 796.8h5.3M51.6 796.8h5.3M3.8 798.8h7.0M46.9 798.8h5.3M53.4 798.8h5.3M3.8 800.8h7.0M47.8 800.8h5.3M54.2 800.8h5.3M3.8 802.8h7.0M46.0 802.8h5.3M52.5 802.8h5.3M3.8 808.8h7.0M41.6 808.8h5.3M48.1 808.8h5.3M3.8 822.8h7.0M60.7 822.8h5.3M67.2 822.8h5.3M3.8 824.8h7.0M62.5 824.8h5.3M68.9 824.8h5.3M3.8 826.8h7.0M63.3 826.8h5.3M69.8 826.8h5.3M3.8 828.8h7.0M61.6 828.8h5.3M68.0 828.8h5.3M3.8 832.8h7.0M59.8 832.8h5.3M66.3 832.8h5.3M3.8 834.8h7.0M61.6 834.8h5.3M68.0 834.8h5.3M3.8 836.8h7.0M62.5 836.8h5.3M68.9 836.8h5.3M3.8 838.8h7.0M60.7 838.8h5.3M67.2 838.8h5.3M3.8 844.8h7.0M56.3 844.8h5.3M62.8 844.8h5.3M3.8 860.8h7.0M46.0 860.8h5.3M52.5 860.8h5.3M3.8 862.8h7.0M47.8 862.8h5.3M54.2 862.8h5.3M3.8 864.8h7.0M48.6 864.8h5.3M55.1 864.8h5.3M3.8 866.8h7.0M46.9 866.8h5.3M53.4 866.8h5.3M3.8 870.8h7.0M45.1 870.8h5.3M51.6 870.8h5.3M3.8 872.8h7.0M46.9 872.8h5.3M53.4 872.8h5.3M3.8 874.8h7.0M47.8 874.8h5.3M54.2 874.8h5.3M3.8 876.8h7.0M46.0 876.8h5.3M52.5 876.8h5.3M3.8 882.8h7.0M41.6 882.8h5.3M48.1 882.8h5.3M3.8 900.8h7.0M60.7 900.8h5.3M67.2 900.8h5.3M3.8 902.8h7.0M62.5 902.8h5.3M68.9 902.8h5.3M3.8 904.8h7.0M63.3 904.8h5.3M69.8 904.8h5.3M3.8 906.8h7.0M61.6 906.8h5.3M68.0 906.8h5.3M3.8 910.8h7.0M59.8 910.8h5.3M66.3 910.8h5.3M3.8 912.8h7.0M61.6 912.8h5.3M68.0 912.8h5.3M3.8 914.8h7.0M62.5 914.8h5.3M68.9 914.8h5.3M3.8 916.8h7.0M60.7 916.8h5.3M67.2 916.8h5.3M3.8 922.8h7.0M56.3 922.8h5.3M62.8 922.8h5.3M0.0 934.8h7.0M36.9 934.8h5.3M43.4 934.8h5.3M0.0 936.8h7.0M29.6 936.8h5.3M36.0 936.8h5.3M3.8 940.8h7.0M26.4 940.8h5.3M32.9 940.8h5.3M4.7 944.8h7.0M33.4 944.8h5.3M39.9 944.8h5.3M4.7 946.8h7.0M34.3 946.8h5.3M40.8 946.8h5.3M4.7 948.8h7.0M35.2 948.8h5.3M41.6 948.8h5.3M4.7 950.8h7.0M36.0 950.8h5.3M42.5 950.8h5.3M4.7 952.8h7.0M36.9 952.8h5.3M43.4 952.8h5.3M4.7 954.8h7.0M37.8 954.8h5.3M44.3 954.8h5.3M4.7 956.8h7.0M38.7 956.8h5.3M45.1 956.8h5.3M4.7 958.8h7.0M39.5 958.8h5.3M46.0 958.8h5.3M6.5 962.8h7.0M43.4 962.8h5.3M49.9 962.8h5.3M6.5 964.8h7.0M44.3 964.8h5.3M50.7 964.8h5.3M6.5 966.8h7.0M46.0 966.8h5.3M52.5 966.8h5.3M6.5 968.8h7.0M46.9 968.8h5.3M53.4 968.8h5.3M6.5 970.8h7.0M48.6 970.8h5.3M55.1 970.8h5.3M6.5 972.8h7.0M49.5 972.8h5.3M56.0 972.8h5.3M6.5 974.8h7.0M50.4 974.8h5.3M56.9 974.8h5.3M6.5 976.8h7.0M52.1 976.8h5.3M58.6 976.8h5.3M3.8 980.8h7.0M36.0 980.8h5.3M42.5 980.8h5.3M3.8 982.8h7.0M36.9 982.8h5.3M43.4 982.8h5.3M3.8 984.8h7.0M37.8 984.8h5.3M44.3 984.8h5.3M3.8 986.8h7.0M39.5 986.8h5.3M46.0 986.8h5.3M3.8 988.8h7.0M40.4 988.8h5.3M46.9 988.8h5.3M3.8 990.8h7.0M41.3 990.8h5.3M47.8 990.8h5.3M3.8 992.8h7.0M42.2 992.8h5.3M48.6 992.8h5.3M3.8 994.8h7.0M43.0 994.8h5.3M49.5 994.8h5.3M4.7 998.8h7.0M39.9 998.8h5.3M46.4 998.8h5.3M4.7 1000.8h7.0M40.8 1000.8h5.3M47.2 1000.8h5.3M4.7 1002.8h7.0M41.6 1002.8h5.3M48.1 1002.8h5.3M4.7 1004.8h7.0M42.5 1004.8h5.3M49.0 1004.8h5.3M4.7 1006.8h7.0M43.4 1006.8h5.3M49.9 1006.8h5.3M4.7 1008.8h7.0M44.3 1008.8h5.3M50.7 1008.8h5.3M4.7 1010.8h7.0M45.1 1010.8h5.3M51.6 1010.8h5.3M4.7 1012.8h7.0M46.0 1012.8h5.3M52.5 1012.8h5.3M3.8 1016.8h7.0M41.6 1016.8h5.3M48.1 1016.8h5.3M3.8 1018.8h7.0M42.5 1018.8h5.3M49.0 1018.8h5.3M3.8 1020.8h7.0M44.3 1020.8h5.3M50.7 1020.8h5.3M3.8 1022.8h7.0M46.0 1022.8h5.3M52.5 1022.8h5.3M3.8 1024.8h7.0M46.9 1024.8h5.3M53.4 1024.8h5.3M3.8 1026.8h7.0M47.8 1026.8h5.3M54.2 1026.8h5.3M3.8 1028.8h7.0M49.5 1028.8h5.3M56.0 1028.8h5.3M3.8 1030.8h7.0M51.3 1030.8h5.3M57.7 1030.8h5.3M6.5 1034.8h7.0M51.9 1034.8h5.3M58.4 1034.8h5.3M6.5 1036.8h7.0M53.7 1036.8h5.3M60.2 1036.8h5.3M6.5 1038.8h7.0M54.6 1038.8h5.3M61.0 1038.8h5.3M6.5 1040.8h7.0M55.4 1040.8h5.3M61.9 1040.8h5.3M6.5 1042.8h7.0M57.2 1042.8h5.3M63.7 1042.8h5.3M6.5 1044.8h7.0M58.9 1044.8h5.3M65.4 1044.8h5.3M6.5 1046.8h7.0M59.8 1046.8h5.3M66.3 1046.8h5.3M6.5 1048.8h7.0M60.7 1048.8h5.3M67.2 1048.8h5.3M3.8 1076.8h7.0M51.1 1076.8h5.3M2.6 1078.8h5.3M0.0 1080.8h9.6M5.6 1082.8h7.0M56.3 1082.8h5.3M2.6 1084.8h5.3M0.0 1086.8h9.6M6.5 1088.8h7.0M58.9 1088.8h5.3M2.6 1090.8h5.3M0.0 1092.8h9.6M4.7 1094.8h7.0M53.7 1094.8h5.3M2.6 1096.8h5.3M0.0 1098.8h9.6M3.8 1102.8h7.0M54.6 1102.8h5.3M2.6 1104.8h5.3M0.0 1106.8h9.6M5.6 1108.8h7.0M59.8 1108.8h5.3M2.6 1110.8h5.3M0.0 1112.8h9.6M4.7 1116.8h7.0M43.4 1116.8h5.3M2.6 1118.8h5.3M0.0 1120.8h9.6M4.7 1122.8h7.0M45.1 1122.8h5.3M2.6 1124.8h5.3M0.0 1126.8h9.6M4.7 1128.8h7.0M46.0 1128.8h5.3M2.6 1130.8h5.3M0.0 1132.8h9.6M4.7 1134.8h7.0M44.3 1134.8h5.3M2.6 1136.8h5.3M0.0 1138.8h9.6M4.7 1142.8h7.0M41.6 1142.8h5.3M2.6 1144.8h5.3M0.0 1146.8h9.6M4.7 1148.8h7.0M43.4 1148.8h5.3M2.6 1150.8h5.3M0.0 1152.8h9.6M4.7 1154.8h7.0M44.3 1154.8h5.3M2.6 1156.8h5.3M0.0 1158.8h9.6M4.7 1160.8h7.0M42.5 1160.8h5.3M2.6 1162.8h5.3M0.0 1164.8h9.6M3.8 1168.8h7.0M51.9 1168.8h0.9M57.0 1168.8h5.3M2.6 1170.8h5.3M0.0 1172.8h9.6M5.6 1174.8h7.0M57.2 1174.8h0.9M62.3 1174.8h5.3M2.6 1176.8h5.3M0.0 1178.8h9.6M6.5 1180.8h7.0M59.8 1180.8h0.9M64.9 1180.8h5.3M2.6 1182.8h5.3M0.0 1184.8h9.6M4.7 1186.8h7.0M54.6 1186.8h0.9M59.6 1186.8h5.3M2.6 1188.8h5.3M0.0 1190.8h9.6M3.8 1194.8h7.0M68.4 1194.8h0.9M76.1 1194.8h5.3M2.6 1196.8h5.3M0.0 1198.8h9.6M3.8 1200.8h7.0M71.9 1200.8h0.9M79.6 1200.8h5.3M2.6 1202.8h5.3M0.0 1204.8h9.6M3.8 1206.8h7.0M73.6 1206.8h0.9M81.3 1206.8h5.3M2.6 1208.8h5.3M0.0 1210.8h9.6M3.8 1212.8h7.0M70.1 1212.8h0.9M77.8 1212.8h5.3M2.6 1214.8h5.3M0.0 1216.8h9.6M3.8 1220.8h7.0M64.0 1220.8h5.3M2.6 1222.8h5.3M0.0 1224.8h9.6M5.6 1226.8h7.0M69.3 1226.8h5.3M2.6 1228.8h5.3M0.0 1230.8h9.6M3.8 1234.8h7.0M69.3 1234.8h0.9M77.8 1234.8h5.3M2.6 1236.8h5.3M0.0 1238.8h9.6M3.8 1240.8h7.0M72.8 1240.8h0.9M81.3 1240.8h5.3M2.6 1242.8h5.3M0.0 1244.8h9.6M3.8 1246.8h7.0M74.5 1246.8h0.9M83.1 1246.8h5.3M2.6 1248.8h5.3M0.0 1250.8h9.6M3.8 1252.8h7.0M71.0 1252.8h0.9M79.6 1252.8h5.3M2.6 1254.8h5.3M0.0 1256.8h9.6M3.8 1260.8h7.0M50.2 1260.8h5.3M2.6 1262.8h5.3M0.0 1264.8h9.6M5.6 1266.8h7.0M53.7 1266.8h5.3M2.6 1268.8h5.3M0.0 1270.8h9.6M6.5 1272.8h7.0M55.4 1272.8h5.3M2.6 1274.8h5.3M0.0 1276.8h9.6M4.7 1278.8h7.0M51.9 1278.8h5.3M2.6 1280.8h5.3M0.0 1282.8h9.6M3.8 1286.8h7.0M60.5 1286.8h5.3M2.6 1288.8h5.3M0.0 1290.8h9.6M5.6 1292.8h7.0M65.8 1292.8h5.3M2.6 1294.8h5.3M0.0 1296.8h9.6M6.5 1298.8h7.0M68.4 1298.8h5.3M2.6 1300.8h5.3"/>
<path stroke="#a6e22e" stroke-opacity="0.7" d="M12.1 118.8h9.6M13.8 120.8h11.4M14.7 122.8h12.3M12.9 124.8h10.5M12.9 142.8h11.4M12.9 144.8h13.1M12.9 146.8h14.0M12.9 148.8h12.3M12.9 164.8h9.6M12.9 166.8h11.4M12.9 168.8h12.3M12.9 170.8h10.5M12.1 188.8h9.6M13.8 190.8h11.4M14.7 192.8h12.3M12.9 194.8h10.5M12.1 212.8h11.4M13.8 214.8h13.1M14.7 216.8h14.0M12.9 218.8h12.3M12.1 238.8h12.3M13.8 240.8h14.0M12.1 264.8h8.8M13.8 266.8h10.5M14.7 268.8h11.4M12.9 270.8h9.6M12.1 288.8h8.8M13.8 290.8h10.5M14.7 292.8h11.4M12.9 294.8h9.6M12.1 314.8h8.8M13.8 316.8h10.5M14.7 318.8h11.4M12.9 320.8h9.6M12.1 340.8h10.5M13.8 342.8h12.3M14.7 344.8h13.1M12.9 346.8h11.4M12.1 360.8h10.5M13.8 362.8h12.3M14.7 364.8h13.1M12.9 366.8h11.4M12.1 380.8h8.8M13.8 382.8h10.5M14.7 384.8h11.4M12.9 386.8h9.6M12.1 408.8h11.4M13.8 410.8h13.1M12.9 430.8h11.4M12.9 432.8h13.1M12.9 434.8h14.0M12.9 436.8h12.3M12.1 458.8h11.4M12.1 460.8h13.1M12.1 462.8h14.0M12.1 464.8h12.3M12.1 482.8h10.5M12.1 484.8h12.3M12.1 486.8h13.1M12.1 488.8h11.4M12.9 506.8h13.1M12.9 508.8h14.9M12.9 510.8h15.8M12.9 512.8h14.0M12.1 526.8h10.5M12.1 528.8h12.3M12.1 530.8h13.1M12.1 532.8h11.4M12.1 550.8h14.9M12.1 552.8h16.6M12.1 554.8h17.5M12.1 556.8h15.8M12.1 574.8h9.6M12.1 576.8h11.4M12.1 578.8h12.3M12.1 580.8h10.5M12.9 598.8h8.8M12.9 600.8h10.5M12.9 602.8h11.4M12.9 604.8h9.6M8.2 618.8h9.6M8.2 620.8h11.4M8.2 622.8h12.3M8.2 624.8h10.5M8.2 646.8h10.5M8.2 648.8h12.3M8.2 650.8h13.1M8.2 652.8h11.4M12.1 680.8h11.4M12.1 682.8h13.1M12.1 684.8h14.0M12.1 686.8h12.3M12.9 710.8h9.6M12.9 712.8h11.4M12.9 714.8h12.3M12.9 716.8h10.5M13.8 734.8h12.3M15.6 736.8h14.0M16.4 738.8h14.9M14.7 740.8h13.1M14.7 762.8h18.4M14.7 766.8h17.5M12.1 786.8h16.6M12.1 788.8h18.4M12.1 790.8h19.3M12.1 792.8h17.5M12.1 796.8h15.8M12.1 798.8h17.5M12.1 800.8h18.4M12.1 802.8h16.6M12.1 808.8h12.3M12.1 822.8h19.3M12.1 824.8h21.0M12.1 826.8h21.9M12.1 828.8h20.1M12.1 832.8h18.4M12.1 834.8h20.1M12.1 836.8h21.0M12.1 838.8h19.3M12.1 844.8h14.9M12.1 860.8h16.6M12.1 862.8h18.4M12.1 864.8h19.3M12.1 866.8h17.5M12.1 870.8h15.8M12.1 872.8h17.5M12.1 874.8h18.4M12.1 876.8h16.6M12.1 882.8h12.3M12.1 900.8h19.3M12.1 902.8h21.0M12.1 904.8h21.9M12.1 906.8h20.1M12.1 910.8h18.4M12.1 912.8h20.1M12.1 914.8h21.0M12.1 916.8h19.3M12.1 922.8h14.9M8.2 934.8h15.8M8.2 936.8h18.4M12.1 940.8h11.4M12.9 944.8h17.5M12.9 946.8h18.4M12.9 948.8h19.3M12.9 950.8h20.1M12.9 952.8h21.0M12.9 954.8h21.9M12.9 956.8h22.8M12.9 958.8h23.6M14.7 962.8h17.5M14.7 964.8h18.4M14.7 966.8h20.1M14.7 968.8h21.0M14.7 970.8h22.8M14.7 972.8h23.6M14.7 974.8h24.5M14.7 976.8h26.3M12.1 980.8h21.0M12.1 982.8h21.9M12.1 984.8h22.8M12.1 986.8h24.5M12.1 988.8h25.4M12.1 990.8h26.3M12.1 992.8h27.1M12.1 994.8h28.0M12.9 998.8h15.8M12.9 1000.8h16.6M12.9 1002.8h17.5M12.9 1004.8h18.4M12.9 1006.8h19.3M12.9 1008.8h20.1M12.9 1010.8h21.0M12.9 1012.8h21.9M12.1 1016.8h16.6M12.1 1018.8h17.5M12.1 1020.8h19.3M12.1 1022.8h21.0M12.1 1024.8h21.9M12.1 1026.8h22.8M12.1 1028.8h24.5M12.1 1030.8h26.3M14.7 1034.8h14.0M14.7 1036.8h15.8M14.7 1038.8h16.6M14.7 1040.8h17.5M14.7 1042.8h19.3M14.7 1044.8h21.0M14.7 1046.8h21.9M14.7 1048.8h22.8M12.1 1076.8h13.1M13.8 1082.8h14.9M14.7 1088.8h15.8M12.9 1094.8h14.0M12.1 1102.8h15.8M13.8 1108.8h17.5M12.9 1116.8h14.9M12.9 1122.8h16.6M12.9 1128.8h17.5M12.9 1134.8h15.8M12.9 1142.8h13.1M12.9 1148.8h14.9M12.9 1154.8h15.8M12.9 1160.8h14.0M12.1 1168.8h13.1M13.8 1174.8h14.9M14.7 1180.8h15.8M12.9 1186.8h14.0M12.1 1194.8h12.3M12.1 1200.8h14.0M12.1 1206.8h14.9M12.1 1212.8h13.1M12.1 1220.8h14.9M13.8 1226.8h16.6M12.1 1234.8h14.9M12.1 1240.8h16.6M12.1 1246.8h17.5M12.1 1252.8h15.8M12.1 1260.8h12.3M13.8 1266.8h14.0M14.7 1272.8h14.9M12.9 1278.8h13.1M12.1 1286.8h12.3M13.8 1292.8h14.0M14.7 1298.8h14.9"/>
<path stroke="#f8f8f2" stroke-opacity="0.6" d="M21.7 118.8h0.9M32.5 118.8h0.9M47.2 118.8h0.9M57.5 118.8h0.9M25.2 120.8h0.9M36.0 120.8h0.9M50.7 120.8h0.9M62.8 120.8h0.9M26.9 122.8h0.9M37.8 122.8h0.9M52.5 122.8h0.9M65.4 122.8h0.9M23.4 124.8h0.9M34.3 124.8h0.9M49.0 124.8h0.9M60.2 124.8h0.9M24.3 142.8h0.9M35.2 142.8h0.9M49.9 142.8h0.9M26.1 144.8h0.9M36.9 144.8h0.9M51.6 144.8h0.9M26.9 146.8h0.9M37.8 146.8h0.9M52.5 146.8h0.9M25.2 148.8h0.9M36.0 148.8h0.9M50.7 148.8h0.9M22.6 164.8h0.9M33.4 164.8h0.9M48.1 164.8h0.9M24.3 166.8h0.9M35.2 166.8h0.9M49.9 166.8h0.9M25.2 168.8h0.9M36.0 168.8h0.9M50.7 168.8h0.9M23.4 170.8h0.9M34.3 170.8h0.9M49.0 170.8h0.9M21.7 188.8h0.9M32.5 188.8h0.9M47.2 188.8h0.9M63.5 188.8h0.9M25.2 190.8h0.9M36.0 190.8h0.9M50.7 190.8h0.9M70.5 190.8h0.9M26.9 192.8h0.9M37.8 192.8h0.9M52.5 192.8h0.9M72.2 192.8h0.9M23.4 194.8h0.9M34.3 194.8h0.9M49.0 194.8h0.9M68.7 194.8h0.9M23.4 212.8h0.9M34.3 212.8h0.9M49.0 212.8h0.9M65.2 212.8h0.9M26.9 214.8h0.9M37.8 214.8h0.9M52.5 214.8h0.9M70.5 214.8h0.9M28.7 216.8h0.9M39.5 216.8h0.9M54.2 216.8h0.9M73.1 216.8h0.9M25.2 218.8h0.9M36.0 218.8h0.9M50.7 218.8h0.9M67.8 218.8h0.9M24.3 238.8h0.9M35.2 238.8h0.9M49.9 238.8h0.9M61.0 238.8h0.9M27.8 240.8h0.9M38.7 240.8h0.9M53.4 240.8h0.9M66.3 240.8h0.9M20.8 264.8h0.9M31.7 264.8h0.9M46.4 264.8h0.9M56.7 264.8h0.9M82.5 264.8h0.9M24.3 266.8h0.9M35.2 266.8h0.9M49.9 266.8h0.9M61.9 266.8h0.9M87.8 266.8h0.9M26.1 268.8h0.9M36.9 268.8h0.9M51.6 268.8h0.9M64.5 268.8h0.9M90.4 268.8h0.9M22.6 270.8h0.9M33.4 270.8h0.9M48.1 270.8h0.9M59.3 270.8h0.9M85.2 270.8h0.9M20.8 288.8h0.9M31.7 288.8h0.9M46.4 288.8h0.9M56.7 288.8h0.9M24.3 290.8h0.9M35.2 290.8h0.9M49.9 290.8h0.9M60.2 290.8h0.9M26.1 292.8h0.9M36.9 292.8h0.9M51.6 292.8h0.9M61.9 292.8h0.9M22.6 294.8h0.9M33.4 294.8h0.9M48.1 294.8h0.9M58.4 294.8h0.9M20.8 314.8h0.9M31.7 314.8h0.9M46.4 314.8h0.9M56.7 314.8h0.9M67.0 314.8h0.9M24.3 316.8h0.9M35.2 316.8h0.9M49.9 316.8h0.9M60.2 316.8h0.9M72.2 316.8h0.9M26.1 318.8h0.9M36.9 318.8h0.9M51.6 318.8h0.9M61.9 318.8h0.9M74.9 318.8h0.9M22.6 320.8h0.9M33.4 320.8h0.9M48.1 320.8h0.9M58.4 320.8h0.9M69.6 320.8h0.9M22.6 340.8h0.9M33.4 340.8h0.9M48.1 340.8h0.9M58.4 340.8h0.9M70.5 340.8h0.9M26.1 342.8h0.9M36.9 342.8h0.9M51.6 342.8h0.9M61.9 342.8h0.9M75.7 342.8h0.9M27.8 344.8h0.9M38.7 344.8h0.9M53.4 344.8h0.9M63.7 344.8h0.9M78.4 344.8h0.9M24.3 346.8h0.9M35.2 346.8h0.9M49.9 346.8h0.9M60.2 346.8h0.9M73.1 346.8h0.9M22.6 360.8h0.9M33.4 360.8h0.9M48.1 360.8h0.9M26.1 362.8h0.9M36.9 362.8h0.9M51.6 362.8h0.9M27.8 364.8h0.9M38.7 364.8h0.9M53.4 364.8h0.9M24.3 366.8h0.9M35.2 366.8h0.9M49.9 366.8h0.9M20.8 380.8h0.9M31.7 380.8h0.9M46.4 380.8h0.9M24.3 382.8h0.9M35.2 382.8h0.9M49.9 382.8h0.9M26.1 384.8h0.9M36.9 384.8h0.9M51.6 384.8h0.9M22.6 386.8h0.9M33.4 386.8h0.9M48.1 386.8h0.9M23.4 408.8h0.9M34.3 408.8h0.9M49.0 408.8h0.9M59.3 408.8h0.9M70.5 408.8h0.9M26.9 410.8h0.9M37.8 410.8h0.9M52.5 410.8h0.9M62.8 410.8h0.9M75.7 410.8h0.9M24.3 430.8h0.9M35.2 430.8h0.9M49.9 430.8h0.9M60.2 430.8h0.9M70.5 430.8h0.9M26.1 432.8h0.9M36.9 432.8h0.9M51.6 432.8h0.9M61.9 432.8h0.9M74.0 432.8h0.9M26.9 434.8h0.9M37.8 434.8h0.9M52.5 434.8h0.9M62.8 434.8h0.9M75.7 434.8h0.9M25.2 436.8h0.9M36.0 436.8h0.9M50.7 436.8h0.9M61.0 436.8h0.9M72.2 436.8h0.9M23.4 458.8h0.9M34.3 458.8h0.9M49.0 458.8h0.9M59.3 458.8h0.9M84.3 458.8h0.9M25.2 460.8h0.9M36.0 460.8h0.9M50.7 460.8h0.9M62.8 460.8h0.9M87.8 460.8h0.9M26.1 462.8h0.9M36.9 462.8h0.9M51.6 462.8h0.9M64.5 462.8h0.9M89.5 462.8h0.9M24.3 464.8h0.9M35.2 464.8h0.9M49.9 464.8h0.9M61.0 464.8h0.9M86.0 464.8h0.9M22.6 482.8h0.9M33.4 482.8h0.9M48.1 482.8h0.9M24.3 484.8h0.9M35.2 484.8h0.9M49.9 484.8h0.9M25.2 486.8h0.9M36.0 486.8h0.9M50.7 486.8h0.9M23.4 488.8h0.9M34.3 488.8h0.9M49.0 488.8h0.9M26.1 506.8h0.9M36.9 506.8h0.9M51.6 506.8h0.9M61.9 506.8h0.9M27.8 508.8h0.9M38.7 508.8h0.9M53.4 508.8h0.9M63.7 508.8h0.9M28.7 510.8h0.9M39.5 510.8h0.9M54.2 510.8h0.9M64.5 510.8h0.9M26.9 512.8h0.9M37.8 512.8h0.9M52.5 512.8h0.9M62.8 512.8h0.9M22.6 526.8h0.9M33.4 526.8h0.9M48.1 526.8h0.9M24.3 528.8h0.9M35.2 528.8h0.9M49.9 528.8h0.9M25.2 530.8h0.9M36.0 530.8h0.9M50.7 530.8h0.9M23.4 532.8h0.9M34.3 532.8h0.9M49.0 532.8h0.9M26.9 550.8h0.9M37.8 550.8h0.9M52.5 550.8h0.9M62.8 550.8h0.9M83.4 550.8h0.9M28.7 552.8h0.9M39.5 552.8h0.9M54.2 552.8h0.9M66.3 552.8h0.9M86.9 552.8h0.9M29.6 554.8h0.9M40.4 554.8h0.9M55.1 554.8h0.9M68.0 554.8h0.9M88.7 554.8h0.9M27.8 556.8h0.9M38.7 556.8h0.9M53.4 556.8h0.9M64.5 556.8h0.9M85.2 556.8h0.9M21.7 574.8h0.9M32.5 574.8h0.9M47.2 574.8h0.9M57.5 574.8h0.9M23.4 576.8h0.9M34.3 576.8h0.9M49.0 576.8h0.9M61.0 576.8h0.9M24.3 578.8h0.9M35.2 578.8h0.9M49.9 578.8h0.9M62.8 578.8h0.9M22.6 580.8h0.9M33.4 580.8h0.9M48.1 580.8h0.9M59.3 580.8h0.9M21.7 598.8h0.9M32.5 598.8h0.9M47.2 598.8h0.9M57.5 598.8h0.9M23.4 600.8h0.9M34.3 600.8h0.9M49.0 600.8h0.9M61.0 600.8h0.9M24.3 602.8h0.9M35.2 602.8h0.9M49.9 602.8h0.9M62.8 602.8h0.9M22.6 604.8h0.9M33.4 604.8h0.9M48.1 604.8h0.9M59.3 604.8h0.9M17.9 618.8h0.9M28.7 618.8h0.9M43.4 618.8h0.9M19.6 620.8h0.9M30.5 620.8h0.9M45.1 620.8h0.9M20.5 622.8h0.9M31.3 622.8h0.9M46.0 622.8h0.9M18.7 624.8h0.9M29.6 624.8h0.9M44.3 624.8h0.9M18.7 646.8h0.9M29.6 646.8h0.9M44.3 646.8h0.9M56.3 646.8h0.9M75.2 646.8h0.9M20.5 648.8h0.9M31.3 648.8h0.9M46.0 648.8h0.9M59.8 648.8h0.9M78.7 648.8h0.9M21.4 650.8h0.9M32.2 650.8h0.9M46.9 650.8h0.9M61.6 650.8h0.9M80.4 650.8h0.9M19.6 652.8h0.9M30.5 652.8h0.9M45.1 652.8h0.9M58.1 652.8h0.9M76.9 652.8h0.9M23.4 680.8h0.9M34.3 680.8h0.9M49.0 680.8h0.9M61.9 680.8h0.9M77.3 680.8h0.9M25.2 682.8h0.9M36.0 682.8h0.9M50.7 682.8h0.9M63.7 682.8h0.9M80.8 682.8h0.9M26.1 684.8h0.9M36.9 684.8h0.9M51.6 684.8h0.9M64.5 684.8h0.9M82.5 684.8h0.9M24.3 686.8h0.9M35.2 686.8h0.9M49.9 686.8h0.9M62.8 686.8h0.9M79.0 686.8h0.9M22.6 710.8h0.9M33.4 710.8h0.9M48.1 710.8h0.9M59.3 710.8h0.9M24.3 712.8h0.9M35.2 712.8h0.9M49.9 712.8h0.9M62.8 712.8h0.9M25.2 714.8h0.9M36.0 714.8h0.9M50.7 714.8h0.9M64.5 714.8h0.9M23.4 716.8h0.9M34.3 716.8h0.9M49.0 716.8h0.9M61.0 716.8h0.9M26.1 734.8h0.9M36.9 734.8h0.9M51.6 734.8h0.9M29.6 736.8h0.9M40.4 736.8h0.9M55.1 736.8h0.9M31.3 738.8h0.9M42.2 738.8h0.9M56.9 738.8h0.9M27.8 740.8h0.9M38.7 740.8h0.9M53.4 740.8h0.9M33.1 762.8h0.9M43.9 762.8h0.9M58.6 762.8h0.9M75.9 762.8h0.9M101.8 762.8h0.9M32.2 766.8h0.9M43.0 766.8h0.9M57.7 766.8h0.9M72.4 766.8h0.9M98.3 766.8h0.9M8.2 768.8h9.6M27.6 768.8h0.9M29.4 768.8h0.9M2.6 770.8h10.5M14.0 770.8h0.9M18.2 770.8h8.8M9.1 772.8h25.4M35.7 772.8h7.0M43.9 772.8h10.5M55.6 772.8h13.1M28.7 786.8h0.9M43.9 786.8h0.9M30.5 788.8h0.9M45.7 788.8h0.9M31.3 790.8h0.9M46.6 790.8h0.9M29.6 792.8h0.9M44.8 792.8h0.9M27.8 796.8h0.9M43.0 796.8h0.9M29.6 798.8h0.9M44.8 798.8h0.9M30.5 800.8h0.9M45.7 800.8h0.9M28.7 802.8h0.9M43.9 802.8h0.9M24.3 808.8h0.9M39.5 808.8h0.9M31.3 822.8h0.9M42.2 822.8h0.9M58.6 822.8h0.9M33.1 824.8h0.9M43.9 824.8h0.9M60.4 824.8h0.9M34.0 826.8h0.9M44.8 826.8h0.9M61.2 826.8h0.9M32.2 828.8h0.9M43.0 828.8h0.9M59.5 828.8h0.9M30.5 832.8h0.9M41.3 832.8h0.9M57.7 832.8h0.9M32.2 834.8h0.9M43.0 834.8h0.9M59.5 834.8h0.9M33.1 836.8h0.9M43.9 836.8h0.9M60.4 836.8h0.9M31.3 838.8h0.9M42.2 838.8h0.9M58.6 838.8h0.9M26.9 844.8h0.9M37.8 844.8h0.9M54.2 844.8h0.9M28.7 860.8h0.9M43.9 860.8h0.9M30.5 862.8h0.9M45.7 862.8h0.9M31.3 864.8h0.9M46.6 864.8h0.9M29.6 866.8h0.9M44.8 866.8h0.9M27.8 870.8h0.9M43.0 870.8h0.9M29.6 872.8h0.9M44.8 872.8h0.9M30.5 874.8h0.9M45.7 874.8h0.9M28.7 876.8h0.9M43.9 876.8h0.9M24.3 882.8h0.9M39.5 882.8h0.9M31.3 900.8h0.9M42.2 900.8h0.9M58.6 900.8h0.9M33.1 902.8h0.9M43.9 902.8h0.9M60.4 902.8h0.9M34.0 904.8h0.9M44.8 904.8h0.9M61.2 904.8h0.9M32.2 906.8h0.9M43.0 906.8h0.9M59.5 906.8h0.9M30.5 910.8h0.9M41.3 910.8h0.9M57.7 910.8h0.9M32.2 912.8h0.9M43.0 912.8h0.9M59.5 912.8h0.9M33.1 914.8h0.9M43.9 914.8h0.9M60.4 914.8h0.9M31.3 916.8h0.9M42.2 916.8h0.9M58.6 916.8h0.9M26.9 922.8h0.9M37.8 922.8h0.9M54.2 922.8h0.9M24.0 934.8h0.9M34.8 934.8h0.9M26.6 936.8h1.8M23.4 940.8h1.8M30.5 944.8h1.8M31.3 946.8h1.8M32.2 948.8h1.8M33.1 950.8h1.8M34.0 952.8h1.8M34.8 954.8h1.8M35.7 956.8h1.8M36.6 958.8h1.8M32.2 962.8h0.9M41.3 962.8h0.9M33.1 964.8h0.9M42.2 964.8h0.9M34.8 966.8h0.9M43.9 966.8h0.9M35.7 968.8h0.9M44.8 968.8h0.9M37.5 970.8h0.9M46.6 970.8h0.9M38.3 972.8h0.9M47.4 972.8h0.9M39.2 974.8h0.9M48.3 974.8h0.9M41.0 976.8h0.9M50.1 976.8h0.9M33.1 980.8h1.8M34.0 982.8h1.8M34.8 984.8h1.8M36.6 986.8h1.8M37.5 988.8h1.8M38.3 990.8h1.8M39.2 992.8h1.8M40.1 994.8h1.8M28.7 998.8h0.9M37.8 998.8h0.9M29.6 1000.8h0.9M38.7 1000.8h0.9M30.5 1002.8h0.9M39.5 1002.8h0.9M31.3 1004.8h0.9M40.4 1004.8h0.9M32.2 1006.8h0.9M41.3 1006.8h0.9M33.1 1008.8h0.9M42.2 1008.8h0.9M34.0 1010.8h0.9M43.0 1010.8h0.9M34.8 1012.8h0.9M43.9 1012.8h0.9M28.7 1016.8h0.9M39.5 1016.8h0.9M29.6 1018.8h0.9M40.4 1018.8h0.9M31.3 1020.8h0.9M42.2 1020.8h0.9M33.1 1022.8h0.9M43.9 1022.8h0.9M34.0 1024.8h0.9M44.8 1024.8h0.9M34.8 1026.8h0.9M45.7 1026.8h0.9M36.6 1028.8h0.9M47.4 1028.8h0.9M38.3 1030.8h0.9M49.2 1030.8h0.9M28.7 1034.8h0.9M39.5 1034.8h0.9M49.9 1034.8h0.9M30.5 1036.8h0.9M41.3 1036.8h0.9M51.6 1036.8h0.9M31.3 1038.8h0.9M42.2 1038.8h0.9M52.5 1038.8h0.9M32.2 1040.8h0.9M43.0 1040.8h0.9M53.4 1040.8h0.9M34.0 1042.8h0.9M44.8 1042.8h0.9M55.1 1042.8h0.9M35.7 1044.8h0.9M46.6 1044.8h0.9M56.9 1044.8h0.9M36.6 1046.8h0.9M47.4 1046.8h0.9M57.7 1046.8h0.9M37.5 1048.8h0.9M48.3 1048.8h0.9M58.6 1048.8h0.9M25.2 1076.8h0.9M38.7 1076.8h0.9M49.0 1076.8h0.9M9.1 1078.8h18.4M41.5 1078.8h0.9M43.6 1078.8h7.0M51.8 1078.8h5.3M28.7 1082.8h0.9M42.2 1082.8h0.9M54.2 1082.8h0.9M9.1 1084.8h20.1M43.2 1084.8h0.9M45.3 1084.8h7.0M53.6 1084.8h5.3M30.5 1088.8h0.9M43.9 1088.8h0.9M56.9 1088.8h0.9M9.1 1090.8h21.0M44.1 1090.8h0.9M46.2 1090.8h7.0M54.4 1090.8h5.3M26.9 1094.8h0.9M40.4 1094.8h0.9M51.6 1094.8h0.9M9.1 1096.8h19.3M42.4 1096.8h0.9M44.5 1096.8h7.0M52.7 1096.8h5.3M27.8 1102.8h0.9M41.3 1102.8h0.9M52.5 1102.8h0.9M9.1 1104.8h21.0M44.1 1104.8h0.9M46.2 1104.8h7.0M54.4 1104.8h6.1M31.3 1108.8h0.9M44.8 1108.8h0.9M57.7 1108.8h0.9M9.1 1110.8h22.8M45.9 1110.8h0.9M48.0 1110.8h7.0M56.2 1110.8h6.1M27.8 1116.8h0.9M41.3 1116.8h0.9M9.1 1118.8h20.1M43.2 1118.8h0.9M45.3 1118.8h7.0M29.6 1122.8h0.9M43.0 1122.8h0.9M9.1 1124.8h21.9M45.0 1124.8h0.9M47.1 1124.8h7.0M30.5 1128.8h0.9M43.9 1128.8h0.9M9.1 1130.8h22.8M45.9 1130.8h0.9M48.0 1130.8h7.0M28.7 1134.8h0.9M42.2 1134.8h0.9M9.1 1136.8h21.0M44.1 1136.8h0.9M46.2 1136.8h7.0M26.1 1142.8h0.9M39.5 1142.8h0.9M9.1 1144.8h18.4M41.5 1144.8h0.9M43.6 1144.8h7.0M27.8 1148.8h0.9M41.3 1148.8h0.9M9.1 1150.8h20.1M43.2 1150.8h0.9M45.3 1150.8h7.0M28.7 1154.8h0.9M42.2 1154.8h0.9M9.1 1156.8h21.0M44.1 1156.8h0.9M46.2 1156.8h7.0M26.9 1160.8h0.9M40.4 1160.8h0.9M9.1 1162.8h19.3M42.4 1162.8h0.9M44.5 1162.8h7.0M25.2 1168.8h0.9M38.7 1168.8h0.9M54.9 1168.8h0.9M9.1 1170.8h18.4M41.5 1170.8h0.9M43.6 1170.8h7.0M51.8 1170.8h7.0M28.7 1174.8h0.9M42.2 1174.8h0.9M60.2 1174.8h0.9M9.1 1176.8h20.1M43.2 1176.8h0.9M45.3 1176.8h7.0M53.6 1176.8h7.0M30.5 1180.8h0.9M43.9 1180.8h0.9M62.8 1180.8h0.9M9.1 1182.8h21.0M44.1 1182.8h0.9M46.2 1182.8h7.0M54.4 1182.8h7.0M26.9 1186.8h0.9M40.4 1186.8h0.9M57.5 1186.8h0.9M9.1 1188.8h19.3M42.4 1188.8h0.9M44.5 1188.8h7.0M52.7 1188.8h7.0M24.3 1194.8h0.9M37.8 1194.8h0.9M48.1 1194.8h0.9M74.0 1194.8h0.9M9.1 1196.8h17.5M40.6 1196.8h0.9M42.7 1196.8h7.0M50.9 1196.8h5.3M57.4 1196.8h13.1M26.1 1200.8h0.9M39.5 1200.8h0.9M51.6 1200.8h0.9M77.5 1200.8h0.9M9.1 1202.8h19.3M42.4 1202.8h0.9M44.5 1202.8h7.0M52.7 1202.8h5.3M59.1 1202.8h13.1M26.9 1206.8h0.9M40.4 1206.8h0.9M53.4 1206.8h0.9M79.2 1206.8h0.9M9.1 1208.8h20.1M43.2 1208.8h0.9M45.3 1208.8h7.0M53.6 1208.8h5.3M60.0 1208.8h13.1M25.2 1212.8h0.9M38.7 1212.8h0.9M49.9 1212.8h0.9M75.7 1212.8h0.9M9.1 1214.8h18.4M41.5 1214.8h0.9M43.6 1214.8h7.0M51.8 1214.8h5.3M58.3 1214.8h13.1M26.9 1220.8h0.9M40.4 1220.8h0.9M50.7 1220.8h0.9M61.9 1220.8h0.9M9.1 1222.8h20.1M43.2 1222.8h0.9M45.3 1222.8h7.0M53.6 1222.8h5.3M60.0 1222.8h6.1M30.5 1226.8h0.9M43.9 1226.8h0.9M54.2 1226.8h0.9M67.2 1226.8h0.9M9.1 1228.8h21.9M45.0 1228.8h0.9M47.1 1228.8h7.0M55.3 1228.8h5.3M61.8 1228.8h6.1M26.9 1234.8h0.9M40.4 1234.8h0.9M50.7 1234.8h0.9M75.7 1234.8h0.9M9.1 1236.8h20.1M43.2 1236.8h0.9M45.3 1236.8h7.0M53.6 1236.8h5.3M60.0 1236.8h11.4M28.7 1240.8h0.9M42.2 1240.8h0.9M54.2 1240.8h0.9M79.2 1240.8h0.9M9.1 1242.8h21.9M45.0 1242.8h0.9M47.1 1242.8h7.0M55.3 1242.8h5.3M61.8 1242.8h11.4M29.6 1246.8h0.9M43.0 1246.8h0.9M56.0 1246.8h0.9M81.0 1246.8h0.9M9.1 1248.8h22.8M45.9 1248.8h0.9M48.0 1248.8h7.0M56.2 1248.8h5.3M62.7 1248.8h11.4M27.8 1252.8h0.9M41.3 1252.8h0.9M52.5 1252.8h0.9M77.5 1252.8h0.9M9.1 1254.8h21.0M44.1 1254.8h0.9M46.2 1254.8h7.0M54.4 1254.8h5.3M60.9 1254.8h11.4M24.3 1260.8h0.9M37.8 1260.8h0.9M48.1 1260.8h0.9M9.1 1262.8h17.5M40.6 1262.8h0.9M42.7 1262.8h7.0M50.9 1262.8h5.3M27.8 1266.8h0.9M41.3 1266.8h0.9M51.6 1266.8h0.9M9.1 1268.8h19.3M42.4 1268.8h0.9M44.5 1268.8h7.0M52.7 1268.8h5.3M29.6 1272.8h0.9M43.0 1272.8h0.9M53.4 1272.8h0.9M9.1 1274.8h20.1M43.2 1274.8h0.9M45.3 1274.8h7.0M53.6 1274.8h5.3M26.1 1278.8h0.9M39.5 1278.8h0.9M49.9 1278.8h0.9M9.1 1280.8h18.4M41.5 1280.8h0.9M43.6 1280.8h7.0M51.8 1280.8h5.3M24.3 1286.8h0.9M37.8 1286.8h0.9M48.1 1286.8h0.9M58.4 1286.8h0.9M9.1 1288.8h17.5M40.6 1288.8h0.9M42.7 1288.8h7.0M50.9 1288.8h5.3M57.4 1288.8h5.3M27.8 1292.8h0.9M41.3 1292.8h0.9M51.6 1292.8h0.9M63.7 1292.8h0.9M9.1 1294.8h19.3M42.4 1294.8h0.9M44.5 1294.8h7.0M52.7 1294.8h5.3M59.1 1294.8h5.3M29.6 1298.8h0.9M43.0 1298.8h0.9M53.4 1298.8h0.9M66.3 1298.8h0.9M9.1 1300.8h20.1M43.2 1300.8h0.9M45.3 1300.8h7.0M53.6 1300.8h5.3M60.0 1300.8h5.3"/>
<path stroke="#fd971f" stroke-opacity="0.7" d="M27.3 118.8h5.3M41.1 118.8h6.1M53.2 118.8h4.4M30.8 120.8h5.3M44.6 120.8h6.1M58.4 120.8h4.4M32.5 122.8h5.3M46.4 122.8h6.1M61.0 122.8h4.4M29.0 124.8h5.3M42.8 124.8h6.1M55.8 124.8h4.4M29.9 142.8h5.3M43.7 142.8h6.1M31.7 144.8h5.3M45.5 144.8h6.1M32.5 146.8h5.3M46.4 146.8h6.1M30.8 148.8h5.3M44.6 148.8h6.1M28.2 164.8h5.3M42.0 164.8h6.1M29.9 166.8h5.3M43.7 166.8h6.1M30.8 168.8h5.3M44.6 168.8h6.1M29.0 170.8h5.3M42.8 170.8h6.1M27.3 188.8h5.3M41.1 188.8h6.1M53.2 188.8h6.1M30.8 190.8h5.3M44.6 190.8h6.1M58.4 190.8h6.1M32.5 192.8h5.3M46.4 192.8h6.1M61.0 192.8h6.1M29.0 194.8h5.3M42.8 194.8h6.1M55.8 194.8h6.1M29.0 212.8h5.3M42.8 212.8h6.1M54.9 212.8h6.1M32.5 214.8h5.3M46.4 214.8h6.1M60.2 214.8h6.1M34.3 216.8h5.3M48.1 216.8h6.1M62.8 216.8h6.1M30.8 218.8h5.3M44.6 218.8h6.1M57.5 218.8h6.1M29.9 238.8h5.3M43.7 238.8h6.1M55.8 238.8h5.3M33.4 240.8h5.3M47.2 240.8h6.1M61.0 240.8h5.3M26.4 264.8h5.3M40.2 264.8h6.1M52.3 264.8h4.4M63.5 264.8h12.3M29.9 266.8h5.3M43.7 266.8h6.1M57.5 266.8h4.4M68.7 266.8h12.3M31.7 268.8h5.3M45.5 268.8h6.1M60.2 268.8h4.4M71.3 268.8h12.3M28.2 270.8h5.3M42.0 270.8h6.1M54.9 270.8h4.4M66.1 270.8h12.3M26.4 288.8h5.3M40.2 288.8h6.1M52.3 288.8h4.4M29.9 290.8h5.3M43.7 290.8h6.1M55.8 290.8h4.4M31.7 292.8h5.3M45.5 292.8h6.1M57.5 292.8h4.4M28.2 294.8h5.3M42.0 294.8h6.1M54.0 294.8h4.4M26.4 314.8h5.3M40.2 314.8h6.1M52.3 314.8h4.4M62.6 314.8h4.4M29.9 316.8h5.3M43.7 316.8h6.1M55.8 316.8h4.4M67.8 316.8h4.4M31.7 318.8h5.3M45.5 318.8h6.1M57.5 318.8h4.4M70.5 318.8h4.4M28.2 320.8h5.3M42.0 320.8h6.1M54.0 320.8h4.4M65.2 320.8h4.4M28.2 340.8h5.3M42.0 340.8h6.1M54.0 340.8h4.4M64.3 340.8h6.1M31.7 342.8h5.3M45.5 342.8h6.1M57.5 342.8h4.4M69.6 342.8h6.1M33.4 344.8h5.3M47.2 344.8h6.1M59.3 344.8h4.4M72.2 344.8h6.1M29.9 346.8h5.3M43.7 346.8h6.1M55.8 346.8h4.4M67.0 346.8h6.1M28.2 360.8h5.3M42.0 360.8h6.1M31.7 362.8h5.3M45.5 362.8h6.1M33.4 364.8h5.3M47.2 364.8h6.1M29.9 366.8h5.3M43.7 366.8h6.1M26.4 380.8h5.3M40.2 380.8h6.1M29.9 382.8h5.3M43.7 382.8h6.1M31.7 384.8h5.3M45.5 384.8h6.1M28.2 386.8h5.3M42.0 386.8h6.1M29.0 408.8h5.3M42.8 408.8h6.1M54.9 408.8h4.4M65.2 408.8h5.3M32.5 410.8h5.3M46.4 410.8h6.1M58.4 410.8h4.4M70.5 410.8h5.3M29.9 430.8h5.3M43.7 430.8h6.1M55.8 430.8h4.4M66.1 430.8h4.4M31.7 432.8h5.3M45.5 432.8h6.1M57.5 432.8h4.4M69.6 432.8h4.4M32.5 434.8h5.3M46.4 434.8h6.1M58.4 434.8h4.4M71.3 434.8h4.4M30.8 436.8h5.3M44.6 436.8h6.1M56.7 436.8h4.4M67.8 436.8h4.4M29.0 458.8h5.3M42.8 458.8h6.1M54.9 458.8h4.4M66.1 458.8h10.5M30.8 460.8h5.3M44.6 460.8h6.1M58.4 460.8h4.4M69.6 460.8h10.5M31.7 462.8h5.3M45.5 462.8h6.1M60.2 462.8h4.4M71.3 462.8h10.5M29.9 464.8h5.3M43.7 464.8h6.1M56.7 464.8h4.4M67.8 464.8h10.5M28.2 482.8h5.3M42.0 482.8h6.1M29.9 484.8h5.3M43.7 484.8h6.1M30.8 486.8h5.3M44.6 486.8h6.1M29.0 488.8h5.3M42.8 488.8h6.1M31.7 506.8h5.3M45.5 506.8h6.1M57.5 506.8h4.4M33.4 508.8h5.3M47.2 508.8h6.1M59.3 508.8h4.4M34.3 510.8h5.3M48.1 510.8h6.1M60.2 510.8h4.4M32.5 512.8h5.3M46.4 512.8h6.1M58.4 512.8h4.4M28.2 526.8h5.3M42.0 526.8h6.1M29.9 528.8h5.3M43.7 528.8h6.1M30.8 530.8h5.3M44.6 530.8h6.1M29.0 532.8h5.3M42.8 532.8h6.1M32.5 550.8h5.3M46.4 550.8h6.1M58.4 550.8h4.4M69.6 550.8h6.1M34.3 552.8h5.3M48.1 552.8h6.1M61.9 552.8h4.4M73.1 552.8h6.1M35.2 554.8h5.3M49.0 554.8h6.1M63.7 554.8h4.4M74.9 554.8h6.1M33.4 556.8h5.3M47.2 556.8h6.1M60.2 556.8h4.4M71.3 556.8h6.1M27.3 574.8h5.3M41.1 574.8h6.1M53.2 574.8h4.4M29.0 576.8h5.3M42.8 576.8h6.1M56.7 576.8h4.4M29.9 578.8h5.3M43.7 578.8h6.1M58.4 578.8h4.4M28.2 580.8h5.3M42.0 580.8h6.1M54.9 580.8h4.4M27.3 598.8h5.3M41.1 598.8h6.1M53.2 598.8h4.4M29.0 600.8h5.3M42.8 600.8h6.1M56.7 600.8h4.4M29.9 602.8h5.3M43.7 602.8h6.1M58.4 602.8h4.4M28.2 604.8h5.3M42.0 604.8h6.1M54.9 604.8h4.4M23.4 618.8h5.3M37.3 618.8h6.1M25.2 620.8h5.3M39.0 620.8h6.1M26.1 622.8h5.3M39.9 622.8h6.1M24.3 624.8h5.3M38.1 624.8h6.1M24.3 646.8h5.3M38.1 646.8h6.1M51.9 646.8h4.4M62.3 646.8h8.8M26.1 648.8h5.3M39.9 648.8h6.1M55.4 648.8h4.4M65.8 648.8h8.8M26.9 650.8h5.3M40.8 650.8h6.1M57.2 650.8h4.4M67.5 650.8h8.8M25.2 652.8h5.3M39.0 652.8h6.1M53.7 652.8h4.4M64.0 652.8h8.8M29.0 680.8h5.3M42.8 680.8h6.1M54.9 680.8h7.0M67.8 680.8h5.3M30.8 682.8h5.3M44.6 682.8h6.1M56.7 682.8h7.0M71.3 682.8h5.3M31.7 684.8h5.3M45.5 684.8h6.1M57.5 684.8h7.0M73.1 684.8h5.3M29.9 686.8h5.3M43.7 686.8h6.1M55.8 686.8h7.0M69.6 686.8h5.3M28.2 710.8h5.3M42.0 710.8h6.1M55.8 710.8h3.5M29.9 712.8h5.3M43.7 712.8h6.1M59.3 712.8h3.5M30.8 714.8h5.3M44.6 714.8h6.1M61.0 714.8h3.5M29.0 716.8h5.3M42.8 716.8h6.1M57.5 716.8h3.5M31.7 734.8h5.3M45.5 734.8h6.1M35.2 736.8h5.3M49.0 736.8h6.1M36.9 738.8h5.3M50.7 738.8h6.1M33.4 740.8h5.3M47.2 740.8h6.1M38.7 762.8h5.3M52.5 762.8h6.1M66.3 762.8h9.6M82.7 762.8h12.3M37.8 766.8h5.3M51.6 766.8h6.1M63.7 766.8h8.8M79.2 766.8h12.3M36.0 786.8h7.9M37.8 788.8h7.9M38.7 790.8h7.9M36.9 792.8h7.9M35.2 796.8h7.9M36.9 798.8h7.9M37.8 800.8h7.9M36.0 802.8h7.9M31.7 808.8h7.9M36.9 822.8h5.3M50.7 822.8h7.9M38.7 824.8h5.3M52.5 824.8h7.9M39.5 826.8h5.3M53.4 826.8h7.9M37.8 828.8h5.3M51.6 828.8h7.9M36.0 832.8h5.3M49.9 832.8h7.9M37.8 834.8h5.3M51.6 834.8h7.9M38.7 836.8h5.3M52.5 836.8h7.9M36.9 838.8h5.3M50.7 838.8h7.9M32.5 844.8h5.3M46.4 844.8h7.9M36.0 860.8h7.9M37.8 862.8h7.9M38.7 864.8h7.9M36.9 866.8h7.9M35.2 870.8h7.9M36.9 872.8h7.9M37.8 874.8h7.9M36.0 876.8h7.9M31.7 882.8h7.9M36.9 900.8h5.3M50.7 900.8h7.9M38.7 902.8h5.3M52.5 902.8h7.9M39.5 904.8h5.3M53.4 904.8h7.9M37.8 906.8h5.3M51.6 906.8h7.9M36.0 910.8h5.3M49.9 910.8h7.9M37.8 912.8h5.3M51.6 912.8h7.9M38.7 914.8h5.3M52.5 914.8h7.9M36.9 916.8h5.3M50.7 916.8h7.9M32.5 922.8h5.3M46.4 922.8h7.9M29.6 934.8h5.3M36.9 962.8h4.4M37.8 964.8h4.4M39.5 966.8h4.4M40.4 968.8h4.4M42.2 970.8h4.4M43.0 972.8h4.4M43.9 974.8h4.4M45.7 976.8h4.4M33.4 998.8h4.4M34.3 1000.8h4.4M35.2 1002.8h4.4M36.0 1004.8h4.4M36.9 1006.8h4.4M37.8 1008.8h4.4M38.7 1010.8h4.4M39.5 1012.8h4.4M34.3 1016.8h5.3M35.2 1018.8h5.3M36.9 1020.8h5.3M38.7 1022.8h5.3M39.5 1024.8h5.3M40.4 1026.8h5.3M42.2 1028.8h5.3M43.9 1030.8h5.3M34.3 1034.8h5.3M45.5 1034.8h4.4M36.0 1036.8h5.3M47.2 1036.8h4.4M36.9 1038.8h5.3M48.1 1038.8h4.4M37.8 1040.8h5.3M49.0 1040.8h4.4M39.5 1042.8h5.3M50.7 1042.8h4.4M41.3 1044.8h5.3M52.5 1044.8h4.4M42.2 1046.8h5.3M53.4 1046.8h4.4M43.0 1048.8h5.3M54.2 1048.8h4.4M32.5 1076.8h6.1M44.6 1076.8h4.4M36.0 1082.8h6.1M49.9 1082.8h4.4M37.8 1088.8h6.1M52.5 1088.8h4.4M34.3 1094.8h6.1M47.2 1094.8h4.4M35.2 1102.8h6.1M47.2 1102.8h5.3M38.7 1108.8h6.1M52.5 1108.8h5.3M35.2 1116.8h6.1M36.9 1122.8h6.1M37.8 1128.8h6.1M36.0 1134.8h6.1M33.4 1142.8h6.1M35.2 1148.8h6.1M36.0 1154.8h6.1M34.3 1160.8h6.1M32.5 1168.8h6.1M44.6 1168.8h6.1M36.0 1174.8h6.1M49.9 1174.8h6.1M37.8 1180.8h6.1M52.5 1180.8h6.1M34.3 1186.8h6.1M47.2 1186.8h6.1M31.7 1194.8h6.1M43.7 1194.8h4.4M54.9 1194.8h12.3M33.4 1200.8h6.1M47.2 1200.8h4.4M58.4 1200.8h12.3M34.3 1206.8h6.1M49.0 1206.8h4.4M60.2 1206.8h12.3M32.5 1212.8h6.1M45.5 1212.8h4.4M56.7 1212.8h12.3M34.3 1220.8h6.1M46.4 1220.8h4.4M56.7 1220.8h5.3M37.8 1226.8h6.1M49.9 1226.8h4.4M61.9 1226.8h5.3M34.3 1234.8h6.1M46.4 1234.8h4.4M57.5 1234.8h10.5M36.0 1240.8h6.1M49.9 1240.8h4.4M61.0 1240.8h10.5M36.9 1246.8h6.1M51.6 1246.8h4.4M62.8 1246.8h10.5M35.2 1252.8h6.1M48.1 1252.8h4.4M59.3 1252.8h10.5M31.7 1260.8h6.1M43.7 1260.8h4.4M35.2 1266.8h6.1M47.2 1266.8h4.4M36.9 1272.8h6.1M49.0 1272.8h4.4M33.4 1278.8h6.1M45.5 1278.8h4.4M31.7 1286.8h6.1M43.7 1286.8h4.4M54.0 1286.8h4.4M35.2 1292.8h6.1M47.2 1292.8h4.4M59.3 1292.8h4.4M36.9 1298.8h6.1M49.0 1298.8h4.4M61.9 1298.8h4.4"/>
<path stroke="#a6e22e" stroke-opacity="0.7" d="M0.0 124.8h3.5M0.0 194.8h3.5M0.0 218.8h3.5M0.0 270.8h3.5M0.0 294.8h3.5M0.0 320.8h3.5M0.0 346.8h3.5M0.0 366.8h3.5M0.0 386.8h3.5M0.0 740.8h5.3M0.0 762.8h5.3M0.0 766.8h5.3M0.0 944.8h3.5M0.0 946.8h3.5M0.0 948.8h3.5M0.0 950.8h3.5M0.0 952.8h3.5M0.0 954.8h3.5M0.0 956.8h3.5M0.0 958.8h3.5M0.0 998.8h3.5M0.0 1000.8h3.5M0.0 1002.8h3.5M0.0 1004.8h3.5M0.0 1006.8h3.5M0.0 1008.8h3.5M0.0 1010.8h3.5M0.0 1012.8h3.5M0.0 1094.8h3.5M0.0 1186.8h3.5M0.0 1278.8h3.5"/>
<path stroke="#ae81ff" stroke-opacity="0.7" d="M62.6 188.8h0.9M67.8 190.8h2.6M65.2 194.8h3.5M64.3 212.8h0.9M69.6 214.8h0.9M72.2 216.8h0.9M67.0 218.8h0.9M79.0 264.8h3.5M84.3 266.8h3.5M86.9 268.8h3.5M81.7 270.8h3.5M79.9 458.8h4.4M83.4 460.8h4.4M85.2 462.8h4.4M81.7 464.8h4.4M79.0 550.8h4.4M82.5 552.8h4.4M84.3 554.8h4.4M80.8 556.8h4.4M74.3 646.8h0.9M77.8 648.8h0.9M79.6 650.8h0.9M76.1 652.8h0.9M76.4 680.8h0.9M79.9 682.8h0.9M81.7 684.8h0.9M78.2 686.8h0.9M98.3 762.8h3.5M94.8 766.8h3.5M28.5 768.8h0.9M13.1 770.8h0.9M54.0 1168.8h0.9M59.3 1174.8h0.9M61.9 1180.8h0.9M56.7 1186.8h0.9M70.5 1194.8h3.5M74.0 1200.8h3.5M75.7 1206.8h3.5M72.2 1212.8h3.5M71.3 1234.8h4.4M74.9 1240.8h4.4M76.6 1246.8h4.4M73.1 1252.8h4.4"/>
<path stroke="#e6db74" stroke-opacity="0.7" d="M70.5 192.8h1.8M27.5 1078.8h14.0M29.2 1084.8h14.0M30.1 1090.8h14.0M28.4 1096.8h14.0M30.1 1104.8h14.0M31.9 1110.8h14.0M29.2 1118.8h14.0M31.0 1124.8h14.0M31.9 1130.8h14.0M30.1 1136.8h14.0M27.5 1144.8h14.0M29.2 1150.8h14.0M30.1 1156.8h14.0M28.4 1162.8h14.0M27.5 1170.8h14.0M29.2 1176.8h14.0M30.1 1182.8h14.0M28.4 1188.8h14.0M26.6 1196.8h14.0M28.4 1202.8h14.0M29.2 1208.8h14.0M27.5 1214.8h14.0M29.2 1222.8h14.0M31.0 1228.8h14.0M29.2 1236.8h14.0M31.0 1242.8h14.0M31.9 1248.8h14.0M30.1 1254.8h14.0M26.6 1262.8h14.0M28.4 1268.8h14.0M29.2 1274.8h14.0M27.5 1280.8h14.0M26.6 1288.8h14.0M28.4 1294.8h14.0M29.2 1300.8h14.0"/>
</svg>
<div id="sbtrack"></div>
<div id="sb"></div>
</body></html>
